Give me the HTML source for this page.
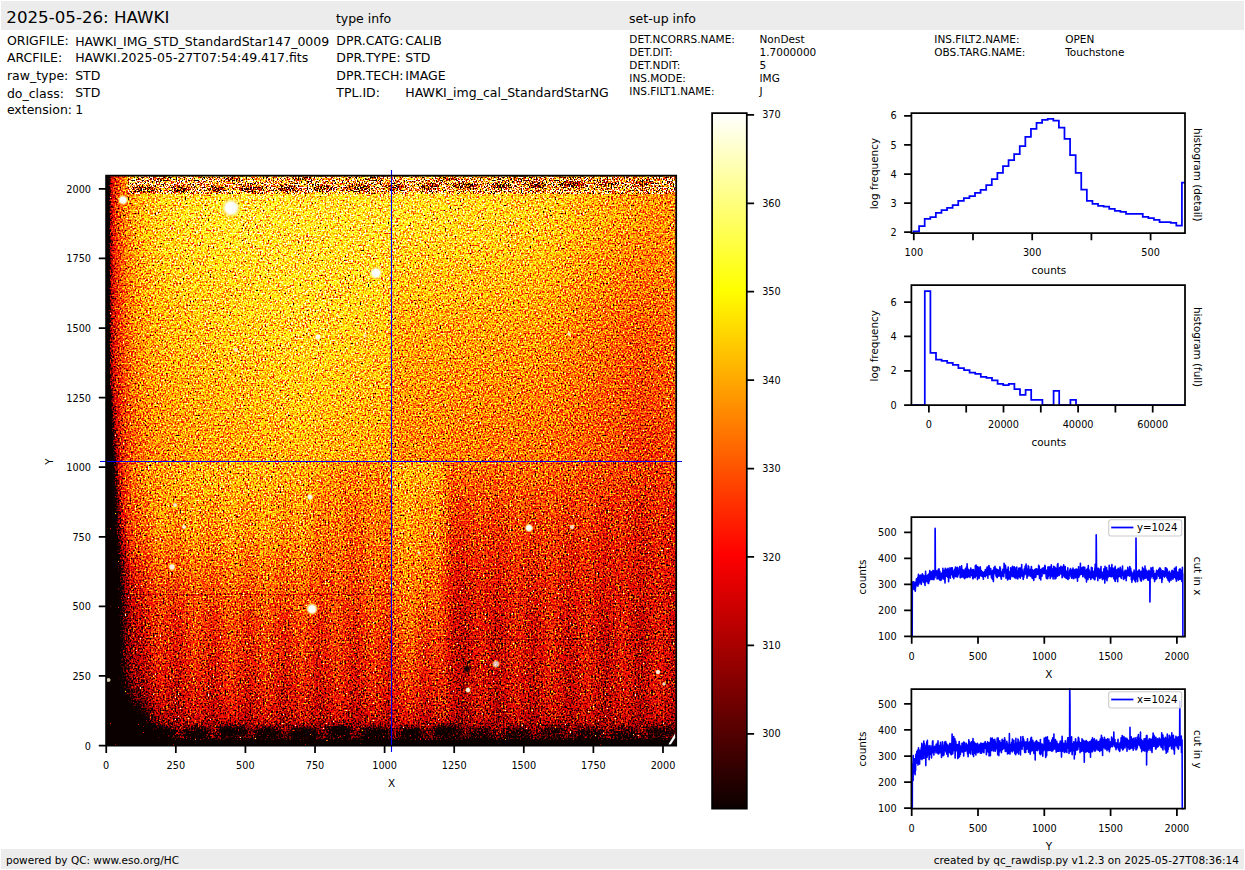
<!DOCTYPE html>
<html lang="en"><head><meta charset="utf-8"><title>2025-05-26: HAWKI</title>
<style>
html,body{margin:0;padding:0;background:#fff;overflow:hidden}
svg{display:block}
text{font-family:'DejaVu Sans','Liberation Sans',sans-serif;fill:#000}
</style></head>
<body>
<svg width="1245" height="870" viewBox="0 0 1245 870">
<defs>
<linearGradient id="hot" x1="0" y1="1" x2="0" y2="0">
<stop offset="0" stop-color="#0b0000"/><stop offset="0.365079" stop-color="#ff0000"/><stop offset="0.746032" stop-color="#ffff00"/><stop offset="1" stop-color="#ffffff"/>
</linearGradient>
<filter id="hotnoise" filterUnits="userSpaceOnUse" x="106" y="175" width="571" height="286.6" color-interpolation-filters="sRGB">
<feTurbulence type="fractalNoise" baseFrequency="0.6" numOctaves="1" seed="5" result="tn"/>
<feColorMatrix in="tn" type="matrix" values="0.4 0.4 0.4 0.4 -0.300  0 0 0 0 0  0 0 0 0 0  0 0 0 0 1" result="nz0"/>
<feComponentTransfer in="nz0" result="nz"><feFuncR type="table" tableValues="0 0 0 0 0 0 0 0 0 0 0 0 0 0 0 0 0 0 0 0 0 0 0 0.09294 0.2492 0.2649 0.2806 0.2962 0.3119 0.3276 0.3433 0.3589 0.3746 0.3903 0.406 0.4216 0.4373 0.453 0.4687 0.4843 0.5 0.5121 0.5241 0.5362 0.5482 0.5603 0.5723 0.5844 0.5965 0.6085 0.6206 0.6326 0.6447 0.6567 0.6688 0.6808 0.6929 0.705 0.717 0.7291 1 1 1 1 1 1 1 1 1 1 1 1 1 1 1 1 1 1 1 1 1"/></feComponentTransfer>
<feComposite in="SourceGraphic" in2="nz" operator="arithmetic" k1="0" k2="1.5" k3="1.560" k4="-1.280" result="val"/>
<feColorMatrix in="val" type="matrix" values="1 0 0 0 0  1 0 0 0 0  1 0 0 0 0  0 0 0 0 1" result="val3"/>
<feComponentTransfer in="val3" result="col">
<feFuncR type="table" tableValues="0.0416 0.08327 0.1249 0.1666 0.2083 0.2499 0.2916 0.3333 0.375 0.4166 0.4583 0.5 0.5416 0.5833 0.625 0.6666 0.7083 0.75 0.7917 0.8333 0.875 0.9167 0.9583 1 1 1 1 1 1 1 1 1 1 1 1 1 1 1 1 1 1 1 1 1 1 1 1 1 1 1 1 1 1 1 1 1 1 1 1 1 1 1 1 1"/>
<feFuncG type="table" tableValues="0 0 0 0 0 0 0 0 0 0 0 0 0 0 0 0 0 0 0 0 0 0 0 0 0.04167 0.08333 0.125 0.1667 0.2083 0.25 0.2917 0.3333 0.375 0.4167 0.4583 0.5 0.5417 0.5833 0.625 0.6667 0.7083 0.75 0.7917 0.8333 0.875 0.9167 0.9583 1 1 1 1 1 1 1 1 1 1 1 1 1 1 1 1 1"/>
<feFuncB type="table" tableValues="0 0 0 0 0 0 0 0 0 0 0 0 0 0 0 0 0 0 0 0 0 0 0 0 0 0 0 0 0 0 0 0 0 0 0 0 0 0 0 0 0 0 0 0 0 0 0 0 0.0625 0.125 0.1875 0.25 0.3125 0.375 0.4375 0.5 0.5625 0.625 0.6875 0.75 0.8125 0.875 0.9375 1"/>
</feComponentTransfer>
<feComposite in="col" in2="SourceGraphic" operator="in"/>
</filter>
<filter id="hotnoiseB" filterUnits="userSpaceOnUse" x="106" y="461.6" width="571" height="285" color-interpolation-filters="sRGB">
<feTurbulence type="fractalNoise" baseFrequency="0.6" numOctaves="1" seed="7" result="tn"/>
<feColorMatrix in="tn" type="matrix" values="0.4 0.4 0.4 0.4 -0.300  0 0 0 0 0  0 0 0 0 0  0 0 0 0 1" result="nz0"/>
<feComponentTransfer in="nz0" result="nz"><feFuncR type="table" tableValues="0 0 0 0 0 0 0 0 0 0 0 0 0 0 0 0 0 0 0 0 0 0 0 0.09294 0.2492 0.2649 0.2806 0.2962 0.3119 0.3276 0.3433 0.3589 0.3746 0.3903 0.406 0.4216 0.4373 0.453 0.4687 0.4843 0.5 0.5121 0.5241 0.5362 0.5482 0.5603 0.5723 0.5844 0.5965 0.6085 0.6206 0.6326 0.6447 0.6567 0.6688 0.6808 0.6929 0.705 0.717 0.7291 1 1 1 1 1 1 1 1 1 1 1 1 1 1 1 1 1 1 1 1 1"/></feComponentTransfer>
<feComposite in="SourceGraphic" in2="nz" operator="arithmetic" k1="0" k2="1.5" k3="1.704" k4="-1.352" result="val"/>
<feColorMatrix in="val" type="matrix" values="1 0 0 0 0  1 0 0 0 0  1 0 0 0 0  0 0 0 0 1" result="val3"/>
<feComponentTransfer in="val3" result="col">
<feFuncR type="table" tableValues="0.0416 0.08327 0.1249 0.1666 0.2083 0.2499 0.2916 0.3333 0.375 0.4166 0.4583 0.5 0.5416 0.5833 0.625 0.6666 0.7083 0.75 0.7917 0.8333 0.875 0.9167 0.9583 1 1 1 1 1 1 1 1 1 1 1 1 1 1 1 1 1 1 1 1 1 1 1 1 1 1 1 1 1 1 1 1 1 1 1 1 1 1 1 1 1"/>
<feFuncG type="table" tableValues="0 0 0 0 0 0 0 0 0 0 0 0 0 0 0 0 0 0 0 0 0 0 0 0 0.04167 0.08333 0.125 0.1667 0.2083 0.25 0.2917 0.3333 0.375 0.4167 0.4583 0.5 0.5417 0.5833 0.625 0.6667 0.7083 0.75 0.7917 0.8333 0.875 0.9167 0.9583 1 1 1 1 1 1 1 1 1 1 1 1 1 1 1 1 1"/>
<feFuncB type="table" tableValues="0 0 0 0 0 0 0 0 0 0 0 0 0 0 0 0 0 0 0 0 0 0 0 0 0 0 0 0 0 0 0 0 0 0 0 0 0 0 0 0 0 0 0 0 0 0 0 0 0.0625 0.125 0.1875 0.25 0.3125 0.375 0.4375 0.5 0.5625 0.625 0.6875 0.75 0.8125 0.875 0.9375 1"/>
</feComponentTransfer>
<feComposite in="col" in2="SourceGraphic" operator="in"/>
</filter>
<filter id="hotnoise2" filterUnits="userSpaceOnUse" x="106" y="175" width="571" height="24" color-interpolation-filters="sRGB">
<feTurbulence type="fractalNoise" baseFrequency="0.71" numOctaves="1" seed="9" result="tn"/>
<feColorMatrix in="tn" type="matrix" values="0.4 0.4 0.4 0.4 -0.300  0 0 0 0 0  0 0 0 0 0  0 0 0 0 1" result="nz0"/>
<feOffset in="nz0" result="nz"/>
<feComposite in="SourceGraphic" in2="nz" operator="arithmetic" k1="0" k2="1.0" k3="5.200" k4="-2.600" result="val"/>
<feColorMatrix in="val" type="matrix" values="1 0 0 0 0  1 0 0 0 0  1 0 0 0 0  0 0 0 0 1" result="val3"/>
<feComponentTransfer in="val3" result="col">
<feFuncR type="table" tableValues="0.0416 0.08327 0.1249 0.1666 0.2083 0.2499 0.2916 0.3333 0.375 0.4166 0.4583 0.5 0.5416 0.5833 0.625 0.6666 0.7083 0.75 0.7917 0.8333 0.875 0.9167 0.9583 1 1 1 1 1 1 1 1 1 1 1 1 1 1 1 1 1 1 1 1 1 1 1 1 1 1 1 1 1 1 1 1 1 1 1 1 1 1 1 1 1"/>
<feFuncG type="table" tableValues="0 0 0 0 0 0 0 0 0 0 0 0 0 0 0 0 0 0 0 0 0 0 0 0 0.04167 0.08333 0.125 0.1667 0.2083 0.25 0.2917 0.3333 0.375 0.4167 0.4583 0.5 0.5417 0.5833 0.625 0.6667 0.7083 0.75 0.7917 0.8333 0.875 0.9167 0.9583 1 1 1 1 1 1 1 1 1 1 1 1 1 1 1 1 1"/>
<feFuncB type="table" tableValues="0 0 0 0 0 0 0 0 0 0 0 0 0 0 0 0 0 0 0 0 0 0 0 0 0 0 0 0 0 0 0 0 0 0 0 0 0 0 0 0 0 0 0 0 0 0 0 0 0.0625 0.125 0.1875 0.25 0.3125 0.375 0.4375 0.5 0.5625 0.625 0.6875 0.75 0.8125 0.875 0.9375 1"/>
</feComponentTransfer>
<feComposite in="col" in2="SourceGraphic" operator="in"/>
</filter>
</defs>

<rect x="1" y="1" width="1243" height="29" fill="#ececec"/>
<rect x="1" y="849" width="1243" height="20" fill="#ececec"/>
<text x="6.3" y="22.8" font-size="16.67" text-anchor="start">2025-05-26: HAWKI</text>
<text x="335.9" y="22.5" font-size="12.5" text-anchor="start">type info</text>
<text x="629.1" y="22.5" font-size="12.5" text-anchor="start">set-up info</text>
<text x="6.9" y="44.9" font-size="12.5" text-anchor="start">ORIGFILE:</text>
<text x="75.2" y="45.5" font-size="12.5" text-anchor="start">HAWKI_IMG_STD_StandardStar147_0009</text>
<text x="6.9" y="61.8" font-size="12.5" text-anchor="start">ARCFILE:</text>
<text x="75.2" y="61.8" font-size="12.5" text-anchor="start">HAWKI.2025-05-27T07:54:49.417.fits</text>
<text x="6.9" y="79.9" font-size="12.5" text-anchor="start">raw_type:</text>
<text x="75.2" y="79.9" font-size="12.5" text-anchor="start">STD</text>
<text x="6.9" y="97.6" font-size="12.5" text-anchor="start">do_class:</text>
<text x="75.2" y="96.6" font-size="12.5" text-anchor="start">STD</text>
<text x="6.9" y="113.6" font-size="12.5" text-anchor="start">extension:</text>
<text x="75.2" y="113.6" font-size="12.5" text-anchor="start">1</text>
<text x="336.3" y="44.9" font-size="12.5" text-anchor="start">DPR.CATG:</text>
<text x="405.3" y="44.9" font-size="12.5" text-anchor="start">CALIB</text>
<text x="336.3" y="61.8" font-size="12.5" text-anchor="start">DPR.TYPE:</text>
<text x="405.3" y="61.8" font-size="12.5" text-anchor="start">STD</text>
<text x="336.3" y="79.8" font-size="12.5" text-anchor="start">DPR.TECH:</text>
<text x="405.3" y="79.8" font-size="12.5" text-anchor="start">IMAGE</text>
<text x="336.3" y="96.7" font-size="12.5" text-anchor="start">TPL.ID:</text>
<text x="405.3" y="96.7" font-size="12.5" text-anchor="start">HAWKI_img_cal_StandardStarNG</text>
<text x="629.3" y="42.7" font-size="10.5" text-anchor="start">DET.NCORRS.NAME:</text>
<text x="759.5" y="42.7" font-size="10.5" text-anchor="start">NonDest</text>
<text x="629.3" y="55.7" font-size="10.5" text-anchor="start">DET.DIT:</text>
<text x="759.5" y="55.7" font-size="10.5" text-anchor="start">1.7000000</text>
<text x="629.3" y="68.8" font-size="10.5" text-anchor="start">DET.NDIT:</text>
<text x="759.5" y="68.8" font-size="10.5" text-anchor="start">5</text>
<text x="629.3" y="81.8" font-size="10.5" text-anchor="start">INS.MODE:</text>
<text x="759.5" y="81.8" font-size="10.5" text-anchor="start">IMG</text>
<text x="629.3" y="94.8" font-size="10.5" text-anchor="start">INS.FILT1.NAME:</text>
<text x="759.5" y="94.8" font-size="10.5" text-anchor="start">J</text>
<text x="934.3" y="42.7" font-size="10.5" text-anchor="start">INS.FILT2.NAME:</text>
<text x="1065.2" y="42.7" font-size="10.5" text-anchor="start">OPEN</text>
<text x="934.3" y="55.7" font-size="10.5" text-anchor="start">OBS.TARG.NAME:</text>
<text x="1065.2" y="55.7" font-size="10.5" text-anchor="start">Touchstone</text>
<text x="6.0" y="863.7" font-size="10.5" text-anchor="start">powered by QC: www.eso.org/HC</text>
<text x="1238.9" y="863.7" font-size="10.5" text-anchor="end">created by qc_rawdisp.py v1.2.3 on 2025-05-27T08:36:14</text>
<defs><linearGradient id="s0"><stop offset="0" stop-color="#000000"/><stop offset="0.004" stop-color="#2a2a2a"/><stop offset="0.008" stop-color="#7c7c7c"/><stop offset="0.012" stop-color="#929292"/><stop offset="0.02" stop-color="#a4a4a4"/><stop offset="0.036" stop-color="#b8b8b8"/><stop offset="0.056" stop-color="#c4c4c4"/><stop offset="0.08" stop-color="#cccccc"/><stop offset="0.13" stop-color="#d3d3d3"/><stop offset="0.24" stop-color="#d8d8d8"/><stop offset="0.502" stop-color="#d5d5d5"/><stop offset="0.76" stop-color="#cdcdcd"/><stop offset="0.96" stop-color="#bababa"/><stop offset="1" stop-color="#b9b9b9"/></linearGradient><linearGradient id="s1"><stop offset="0" stop-color="#000000"/><stop offset="0.004" stop-color="#2a2a2a"/><stop offset="0.008" stop-color="#7c7c7c"/><stop offset="0.012" stop-color="#929292"/><stop offset="0.02" stop-color="#a4a4a4"/><stop offset="0.036" stop-color="#b8b8b8"/><stop offset="0.06" stop-color="#c6c6c6"/><stop offset="0.1" stop-color="#d0d0d0"/><stop offset="0.24" stop-color="#d8d8d8"/><stop offset="0.502" stop-color="#d5d5d5"/><stop offset="0.76" stop-color="#cdcdcd"/><stop offset="0.96" stop-color="#bababa"/><stop offset="1" stop-color="#b9b9b9"/></linearGradient><linearGradient id="s2"><stop offset="0" stop-color="#000000"/><stop offset="0.004" stop-color="#2a2a2a"/><stop offset="0.008" stop-color="#7c7c7c"/><stop offset="0.012" stop-color="#919191"/><stop offset="0.02" stop-color="#a4a4a4"/><stop offset="0.036" stop-color="#b8b8b8"/><stop offset="0.06" stop-color="#c6c6c6"/><stop offset="0.1" stop-color="#d0d0d0"/><stop offset="0.24" stop-color="#d8d8d8"/><stop offset="0.502" stop-color="#d5d5d5"/><stop offset="0.76" stop-color="#cdcdcd"/><stop offset="0.96" stop-color="#bababa"/><stop offset="1" stop-color="#b9b9b9"/></linearGradient><linearGradient id="s3"><stop offset="0" stop-color="#000000"/><stop offset="0.004" stop-color="#2a2a2a"/><stop offset="0.008" stop-color="#7c7c7c"/><stop offset="0.012" stop-color="#919191"/><stop offset="0.016" stop-color="#9c9c9c"/><stop offset="0.028" stop-color="#afafaf"/><stop offset="0.044" stop-color="#bebebe"/><stop offset="0.076" stop-color="#cbcbcb"/><stop offset="0.13" stop-color="#d3d3d3"/><stop offset="0.24" stop-color="#d8d8d8"/><stop offset="0.502" stop-color="#d5d5d5"/><stop offset="0.76" stop-color="#cdcdcd"/><stop offset="0.96" stop-color="#bababa"/><stop offset="1" stop-color="#b9b9b9"/></linearGradient><linearGradient id="s4"><stop offset="0" stop-color="#000000"/><stop offset="0.004" stop-color="#2a2a2a"/><stop offset="0.008" stop-color="#7c7c7c"/><stop offset="0.012" stop-color="#919191"/><stop offset="0.016" stop-color="#9c9c9c"/><stop offset="0.028" stop-color="#afafaf"/><stop offset="0.044" stop-color="#bebebe"/><stop offset="0.076" stop-color="#cbcbcb"/><stop offset="0.13" stop-color="#d3d3d3"/><stop offset="0.24" stop-color="#d8d8d8"/><stop offset="0.502" stop-color="#d5d5d5"/><stop offset="0.76" stop-color="#cdcdcd"/><stop offset="0.96" stop-color="#bababa"/><stop offset="1" stop-color="#b9b9b9"/></linearGradient><linearGradient id="s5"><stop offset="0" stop-color="#000000"/><stop offset="0.004" stop-color="#2a2a2a"/><stop offset="0.008" stop-color="#7b7b7b"/><stop offset="0.012" stop-color="#919191"/><stop offset="0.02" stop-color="#a3a3a3"/><stop offset="0.036" stop-color="#b7b7b7"/><stop offset="0.056" stop-color="#c4c4c4"/><stop offset="0.1" stop-color="#cfcfcf"/><stop offset="0.22" stop-color="#d7d7d7"/><stop offset="0.498" stop-color="#d5d5d5"/><stop offset="0.52" stop-color="#d3d3d3"/><stop offset="0.76" stop-color="#cccccc"/><stop offset="0.94" stop-color="#bababa"/><stop offset="1" stop-color="#b9b9b9"/></linearGradient><linearGradient id="s6"><stop offset="0" stop-color="#000000"/><stop offset="0.004" stop-color="#292929"/><stop offset="0.008" stop-color="#7b7b7b"/><stop offset="0.012" stop-color="#909090"/><stop offset="0.016" stop-color="#9b9b9b"/><stop offset="0.028" stop-color="#aeaeae"/><stop offset="0.048" stop-color="#bfbfbf"/><stop offset="0.08" stop-color="#cbcbcb"/><stop offset="0.12" stop-color="#d0d0d0"/><stop offset="0.24" stop-color="#d6d6d6"/><stop offset="0.4" stop-color="#d6d6d6"/><stop offset="0.502" stop-color="#d3d3d3"/><stop offset="0.61" stop-color="#d0d0d0"/><stop offset="0.78" stop-color="#c9c9c9"/><stop offset="0.94" stop-color="#b8b8b8"/><stop offset="1" stop-color="#b8b8b8"/></linearGradient><linearGradient id="s7"><stop offset="0" stop-color="#000000"/><stop offset="0.004" stop-color="#292929"/><stop offset="0.008" stop-color="#7a7a7a"/><stop offset="0.012" stop-color="#8f8f8f"/><stop offset="0.016" stop-color="#9a9a9a"/><stop offset="0.028" stop-color="#adadad"/><stop offset="0.044" stop-color="#bbbbbb"/><stop offset="0.064" stop-color="#c5c5c5"/><stop offset="0.1" stop-color="#cecece"/><stop offset="0.26" stop-color="#d6d6d6"/><stop offset="0.495" stop-color="#d3d3d3"/><stop offset="0.505" stop-color="#d0d0d0"/><stop offset="0.76" stop-color="#c9c9c9"/><stop offset="0.94" stop-color="#b7b7b7"/><stop offset="1" stop-color="#b7b7b7"/></linearGradient><linearGradient id="s8"><stop offset="0" stop-color="#000000"/><stop offset="0.004" stop-color="#282828"/><stop offset="0.008" stop-color="#797979"/><stop offset="0.012" stop-color="#8f8f8f"/><stop offset="0.02" stop-color="#a1a1a1"/><stop offset="0.036" stop-color="#b5b5b5"/><stop offset="0.06" stop-color="#c3c3c3"/><stop offset="0.1" stop-color="#cdcdcd"/><stop offset="0.26" stop-color="#d5d5d5"/><stop offset="0.38" stop-color="#d5d5d5"/><stop offset="0.498" stop-color="#d1d1d1"/><stop offset="0.505" stop-color="#cecece"/><stop offset="0.76" stop-color="#c8c8c8"/><stop offset="0.94" stop-color="#b5b5b5"/><stop offset="1" stop-color="#b6b6b6"/></linearGradient><linearGradient id="s9"><stop offset="0" stop-color="#000000"/><stop offset="0.004" stop-color="#282828"/><stop offset="0.008" stop-color="#797979"/><stop offset="0.012" stop-color="#8e8e8e"/><stop offset="0.016" stop-color="#999999"/><stop offset="0.028" stop-color="#acacac"/><stop offset="0.044" stop-color="#bababa"/><stop offset="0.068" stop-color="#c5c5c5"/><stop offset="0.11" stop-color="#cdcdcd"/><stop offset="0.3" stop-color="#d5d5d5"/><stop offset="0.495" stop-color="#d1d1d1"/><stop offset="0.505" stop-color="#cdcdcd"/><stop offset="0.76" stop-color="#c6c6c6"/><stop offset="0.94" stop-color="#b4b4b4"/><stop offset="1" stop-color="#b5b5b5"/></linearGradient><linearGradient id="s10"><stop offset="0" stop-color="#000000"/><stop offset="0.004" stop-color="#272727"/><stop offset="0.008" stop-color="#787878"/><stop offset="0.012" stop-color="#8e8e8e"/><stop offset="0.02" stop-color="#9f9f9f"/><stop offset="0.028" stop-color="#ababab"/><stop offset="0.048" stop-color="#bcbcbc"/><stop offset="0.08" stop-color="#c7c7c7"/><stop offset="0.12" stop-color="#cdcdcd"/><stop offset="0.32" stop-color="#d4d4d4"/><stop offset="0.495" stop-color="#d0d0d0"/><stop offset="0.505" stop-color="#cbcbcb"/><stop offset="0.76" stop-color="#c5c5c5"/><stop offset="0.94" stop-color="#b3b3b3"/><stop offset="1" stop-color="#b4b4b4"/></linearGradient><linearGradient id="s11"><stop offset="0" stop-color="#000000"/><stop offset="0.004" stop-color="#272727"/><stop offset="0.008" stop-color="#787878"/><stop offset="0.012" stop-color="#8d8d8d"/><stop offset="0.02" stop-color="#9f9f9f"/><stop offset="0.032" stop-color="#afafaf"/><stop offset="0.052" stop-color="#bdbdbd"/><stop offset="0.08" stop-color="#c6c6c6"/><stop offset="0.12" stop-color="#cccccc"/><stop offset="0.34" stop-color="#d4d4d4"/><stop offset="0.495" stop-color="#cfcfcf"/><stop offset="0.505" stop-color="#cacaca"/><stop offset="0.76" stop-color="#c4c4c4"/><stop offset="0.94" stop-color="#b1b1b1"/><stop offset="1" stop-color="#b3b3b3"/></linearGradient><linearGradient id="s12"><stop offset="0" stop-color="#000000"/><stop offset="0.004" stop-color="#262626"/><stop offset="0.008" stop-color="#777777"/><stop offset="0.012" stop-color="#8c8c8c"/><stop offset="0.016" stop-color="#979797"/><stop offset="0.032" stop-color="#aeaeae"/><stop offset="0.048" stop-color="#bababa"/><stop offset="0.076" stop-color="#c5c5c5"/><stop offset="0.14" stop-color="#cccccc"/><stop offset="0.34" stop-color="#d3d3d3"/><stop offset="0.48" stop-color="#cfcfcf"/><stop offset="0.498" stop-color="#cccccc"/><stop offset="0.505" stop-color="#c8c8c8"/><stop offset="0.74" stop-color="#c4c4c4"/><stop offset="0.94" stop-color="#b0b0b0"/><stop offset="1" stop-color="#b2b2b2"/></linearGradient><linearGradient id="s13"><stop offset="0" stop-color="#000000"/><stop offset="0.004" stop-color="#262626"/><stop offset="0.008" stop-color="#777777"/><stop offset="0.012" stop-color="#8c8c8c"/><stop offset="0.02" stop-color="#9d9d9d"/><stop offset="0.028" stop-color="#a9a9a9"/><stop offset="0.044" stop-color="#b7b7b7"/><stop offset="0.076" stop-color="#c4c4c4"/><stop offset="0.14" stop-color="#cbcbcb"/><stop offset="0.34" stop-color="#d3d3d3"/><stop offset="0.495" stop-color="#cdcdcd"/><stop offset="0.505" stop-color="#c6c6c6"/><stop offset="0.76" stop-color="#c1c1c1"/><stop offset="0.94" stop-color="#aeaeae"/><stop offset="1" stop-color="#b2b2b2"/></linearGradient><linearGradient id="s14"><stop offset="0" stop-color="#000000"/><stop offset="0.004" stop-color="#252525"/><stop offset="0.008" stop-color="#767676"/><stop offset="0.012" stop-color="#8b8b8b"/><stop offset="0.02" stop-color="#9d9d9d"/><stop offset="0.036" stop-color="#b0b0b0"/><stop offset="0.056" stop-color="#bdbdbd"/><stop offset="0.09" stop-color="#c6c6c6"/><stop offset="0.24" stop-color="#cfcfcf"/><stop offset="0.36" stop-color="#d2d2d2"/><stop offset="0.495" stop-color="#cccccc"/><stop offset="0.505" stop-color="#c5c5c5"/><stop offset="0.76" stop-color="#c0c0c0"/><stop offset="0.94" stop-color="#adadad"/><stop offset="1" stop-color="#b1b1b1"/></linearGradient><linearGradient id="s15"><stop offset="0" stop-color="#000000"/><stop offset="0.004" stop-color="#252525"/><stop offset="0.008" stop-color="#757575"/><stop offset="0.012" stop-color="#8b8b8b"/><stop offset="0.02" stop-color="#9c9c9c"/><stop offset="0.032" stop-color="#acacac"/><stop offset="0.052" stop-color="#bababa"/><stop offset="0.08" stop-color="#c3c3c3"/><stop offset="0.17" stop-color="#cbcbcb"/><stop offset="0.36" stop-color="#d1d1d1"/><stop offset="0.48" stop-color="#cccccc"/><stop offset="0.498" stop-color="#c9c9c9"/><stop offset="0.505" stop-color="#c3c3c3"/><stop offset="0.76" stop-color="#bebebe"/><stop offset="0.94" stop-color="#ababab"/><stop offset="1" stop-color="#b0b0b0"/></linearGradient><linearGradient id="s16"><stop offset="0" stop-color="#000000"/><stop offset="0.004" stop-color="#242424"/><stop offset="0.008" stop-color="#757575"/><stop offset="0.012" stop-color="#8a8a8a"/><stop offset="0.02" stop-color="#9b9b9b"/><stop offset="0.032" stop-color="#ababab"/><stop offset="0.048" stop-color="#b7b7b7"/><stop offset="0.072" stop-color="#c0c0c0"/><stop offset="0.12" stop-color="#c7c7c7"/><stop offset="0.34" stop-color="#d1d1d1"/><stop offset="0.48" stop-color="#cbcbcb"/><stop offset="0.498" stop-color="#c8c8c8"/><stop offset="0.505" stop-color="#c2c2c2"/><stop offset="0.76" stop-color="#bdbdbd"/><stop offset="0.94" stop-color="#aaaaaa"/><stop offset="1" stop-color="#afafaf"/></linearGradient><linearGradient id="s17"><stop offset="0" stop-color="#000000"/><stop offset="0.004" stop-color="#232323"/><stop offset="0.008" stop-color="#747474"/><stop offset="0.012" stop-color="#898989"/><stop offset="0.02" stop-color="#9a9a9a"/><stop offset="0.032" stop-color="#aaaaaa"/><stop offset="0.048" stop-color="#b6b6b6"/><stop offset="0.072" stop-color="#bfbfbf"/><stop offset="0.1" stop-color="#c5c5c5"/><stop offset="0.34" stop-color="#d0d0d0"/><stop offset="0.46" stop-color="#cbcbcb"/><stop offset="0.495" stop-color="#c9c9c9"/><stop offset="0.505" stop-color="#c1c1c1"/><stop offset="0.76" stop-color="#bcbcbc"/><stop offset="0.94" stop-color="#a9a9a9"/><stop offset="1" stop-color="#aeaeae"/></linearGradient><linearGradient id="s18"><stop offset="0" stop-color="#000000"/><stop offset="0.004" stop-color="#222222"/><stop offset="0.008" stop-color="#737373"/><stop offset="0.012" stop-color="#888888"/><stop offset="0.02" stop-color="#9a9a9a"/><stop offset="0.036" stop-color="#adadad"/><stop offset="0.06" stop-color="#bbbbbb"/><stop offset="0.11" stop-color="#c5c5c5"/><stop offset="0.34" stop-color="#cfcfcf"/><stop offset="0.46" stop-color="#cbcbcb"/><stop offset="0.495" stop-color="#c8c8c8"/><stop offset="0.505" stop-color="#c0c0c0"/><stop offset="0.76" stop-color="#bbbbbb"/><stop offset="0.94" stop-color="#a8a8a8"/><stop offset="1" stop-color="#adadad"/></linearGradient><linearGradient id="s19"><stop offset="0" stop-color="#000000"/><stop offset="0.004" stop-color="#222222"/><stop offset="0.008" stop-color="#727272"/><stop offset="0.012" stop-color="#878787"/><stop offset="0.02" stop-color="#999999"/><stop offset="0.036" stop-color="#acacac"/><stop offset="0.06" stop-color="#bababa"/><stop offset="0.1" stop-color="#c3c3c3"/><stop offset="0.34" stop-color="#cecece"/><stop offset="0.46" stop-color="#cacaca"/><stop offset="0.495" stop-color="#c7c7c7"/><stop offset="0.505" stop-color="#bfbfbf"/><stop offset="0.76" stop-color="#bababa"/><stop offset="0.92" stop-color="#aaaaaa"/><stop offset="0.94" stop-color="#a7a7a7"/><stop offset="1" stop-color="#acacac"/></linearGradient><linearGradient id="s20"><stop offset="0" stop-color="#000000"/><stop offset="0.004" stop-color="#212121"/><stop offset="0.008" stop-color="#717171"/><stop offset="0.012" stop-color="#868686"/><stop offset="0.02" stop-color="#989898"/><stop offset="0.036" stop-color="#ababab"/><stop offset="0.056" stop-color="#b7b7b7"/><stop offset="0.08" stop-color="#bfbfbf"/><stop offset="0.16" stop-color="#c6c6c6"/><stop offset="0.36" stop-color="#cdcdcd"/><stop offset="0.495" stop-color="#c7c7c7"/><stop offset="0.505" stop-color="#bfbfbf"/><stop offset="0.76" stop-color="#b9b9b9"/><stop offset="0.92" stop-color="#a9a9a9"/><stop offset="0.94" stop-color="#a6a6a6"/><stop offset="1" stop-color="#ababab"/></linearGradient><linearGradient id="s21"><stop offset="0" stop-color="#000000"/><stop offset="0.004" stop-color="#121212"/><stop offset="0.008" stop-color="#6c6c6c"/><stop offset="0.012" stop-color="#848484"/><stop offset="0.02" stop-color="#979797"/><stop offset="0.036" stop-color="#aaaaaa"/><stop offset="0.056" stop-color="#b7b7b7"/><stop offset="0.09" stop-color="#c0c0c0"/><stop offset="0.32" stop-color="#cccccc"/><stop offset="0.48" stop-color="#c7c7c7"/><stop offset="0.495" stop-color="#c6c6c6"/><stop offset="0.505" stop-color="#bebebe"/><stop offset="0.76" stop-color="#b8b8b8"/><stop offset="0.9" stop-color="#ababab"/><stop offset="0.94" stop-color="#a5a5a5"/><stop offset="1" stop-color="#ababab"/></linearGradient><linearGradient id="s22"><stop offset="0" stop-color="#000000"/><stop offset="0.004" stop-color="#000000"/><stop offset="0.008" stop-color="#5f5f5f"/><stop offset="0.012" stop-color="#7f7f7f"/><stop offset="0.016" stop-color="#8d8d8d"/><stop offset="0.024" stop-color="#9c9c9c"/><stop offset="0.04" stop-color="#adadad"/><stop offset="0.064" stop-color="#b9b9b9"/><stop offset="0.11" stop-color="#c1c1c1"/><stop offset="0.34" stop-color="#cbcbcb"/><stop offset="0.495" stop-color="#c5c5c5"/><stop offset="0.505" stop-color="#bdbdbd"/><stop offset="0.78" stop-color="#b6b6b6"/><stop offset="0.9" stop-color="#aaaaaa"/><stop offset="0.94" stop-color="#a5a5a5"/><stop offset="1" stop-color="#aaaaaa"/></linearGradient><linearGradient id="s23"><stop offset="0" stop-color="#000000"/><stop offset="0.004" stop-color="#000000"/><stop offset="0.008" stop-color="#505050"/><stop offset="0.012" stop-color="#797979"/><stop offset="0.016" stop-color="#8a8a8a"/><stop offset="0.024" stop-color="#9b9b9b"/><stop offset="0.04" stop-color="#acacac"/><stop offset="0.064" stop-color="#b8b8b8"/><stop offset="0.11" stop-color="#c0c0c0"/><stop offset="0.34" stop-color="#cbcbcb"/><stop offset="0.495" stop-color="#c4c4c4"/><stop offset="0.505" stop-color="#bcbcbc"/><stop offset="0.78" stop-color="#b5b5b5"/><stop offset="0.92" stop-color="#a7a7a7"/><stop offset="0.94" stop-color="#a4a4a4"/><stop offset="1" stop-color="#a9a9a9"/></linearGradient><linearGradient id="s24"><stop offset="0" stop-color="#000000"/><stop offset="0.004" stop-color="#000000"/><stop offset="0.008" stop-color="#414141"/><stop offset="0.012" stop-color="#717171"/><stop offset="0.016" stop-color="#878787"/><stop offset="0.02" stop-color="#929292"/><stop offset="0.032" stop-color="#a4a4a4"/><stop offset="0.052" stop-color="#b2b2b2"/><stop offset="0.08" stop-color="#bbbbbb"/><stop offset="0.15" stop-color="#c2c2c2"/><stop offset="0.34" stop-color="#cacaca"/><stop offset="0.495" stop-color="#c3c3c3"/><stop offset="0.505" stop-color="#bcbcbc"/><stop offset="0.78" stop-color="#b4b4b4"/><stop offset="0.9" stop-color="#a9a9a9"/><stop offset="0.94" stop-color="#a3a3a3"/><stop offset="1" stop-color="#a8a8a8"/></linearGradient><linearGradient id="s25"><stop offset="0" stop-color="#000000"/><stop offset="0.004" stop-color="#000000"/><stop offset="0.008" stop-color="#313131"/><stop offset="0.012" stop-color="#686868"/><stop offset="0.016" stop-color="#828282"/><stop offset="0.02" stop-color="#8f8f8f"/><stop offset="0.028" stop-color="#9e9e9e"/><stop offset="0.044" stop-color="#adadad"/><stop offset="0.068" stop-color="#b7b7b7"/><stop offset="0.11" stop-color="#bebebe"/><stop offset="0.34" stop-color="#c9c9c9"/><stop offset="0.495" stop-color="#c2c2c2"/><stop offset="0.505" stop-color="#bbbbbb"/><stop offset="0.78" stop-color="#b3b3b3"/><stop offset="0.9" stop-color="#a8a8a8"/><stop offset="0.94" stop-color="#a2a2a2"/><stop offset="1" stop-color="#a7a7a7"/></linearGradient><linearGradient id="s26"><stop offset="0" stop-color="#000000"/><stop offset="0.004" stop-color="#000000"/><stop offset="0.008" stop-color="#222222"/><stop offset="0.012" stop-color="#5f5f5f"/><stop offset="0.016" stop-color="#7c7c7c"/><stop offset="0.02" stop-color="#8c8c8c"/><stop offset="0.024" stop-color="#969696"/><stop offset="0.04" stop-color="#a9a9a9"/><stop offset="0.064" stop-color="#b5b5b5"/><stop offset="0.1" stop-color="#bdbdbd"/><stop offset="0.34" stop-color="#c8c8c8"/><stop offset="0.495" stop-color="#c1c1c1"/><stop offset="0.505" stop-color="#bababa"/><stop offset="0.78" stop-color="#b2b2b2"/><stop offset="0.9" stop-color="#a7a7a7"/><stop offset="0.94" stop-color="#a1a1a1"/><stop offset="1" stop-color="#a6a6a6"/></linearGradient><linearGradient id="s27"><stop offset="0" stop-color="#000000"/><stop offset="0.004" stop-color="#000000"/><stop offset="0.008" stop-color="#131313"/><stop offset="0.012" stop-color="#555555"/><stop offset="0.016" stop-color="#767676"/><stop offset="0.02" stop-color="#888888"/><stop offset="0.028" stop-color="#9b9b9b"/><stop offset="0.044" stop-color="#ababab"/><stop offset="0.076" stop-color="#b8b8b8"/><stop offset="0.14" stop-color="#bfbfbf"/><stop offset="0.34" stop-color="#c7c7c7"/><stop offset="0.495" stop-color="#c1c1c1"/><stop offset="0.505" stop-color="#b9b9b9"/><stop offset="0.78" stop-color="#b1b1b1"/><stop offset="0.9" stop-color="#a7a7a7"/><stop offset="0.94" stop-color="#a0a0a0"/><stop offset="1" stop-color="#a5a5a5"/></linearGradient><linearGradient id="s28"><stop offset="0" stop-color="#000000"/><stop offset="0.004" stop-color="#000000"/><stop offset="0.008" stop-color="#040404"/><stop offset="0.012" stop-color="#4a4a4a"/><stop offset="0.016" stop-color="#6f6f6f"/><stop offset="0.02" stop-color="#848484"/><stop offset="0.024" stop-color="#919191"/><stop offset="0.032" stop-color="#9f9f9f"/><stop offset="0.048" stop-color="#acacac"/><stop offset="0.08" stop-color="#b8b8b8"/><stop offset="0.16" stop-color="#bfbfbf"/><stop offset="0.34" stop-color="#c6c6c6"/><stop offset="0.495" stop-color="#c0c0c0"/><stop offset="0.505" stop-color="#b9b9b9"/><stop offset="0.76" stop-color="#b2b2b2"/><stop offset="0.88" stop-color="#a9a9a9"/><stop offset="0.94" stop-color="#9f9f9f"/><stop offset="1" stop-color="#a4a4a4"/></linearGradient><linearGradient id="s29"><stop offset="0" stop-color="#000000"/><stop offset="0.008" stop-color="#000000"/><stop offset="0.012" stop-color="#3f3f3f"/><stop offset="0.016" stop-color="#686868"/><stop offset="0.02" stop-color="#7f7f7f"/><stop offset="0.024" stop-color="#8d8d8d"/><stop offset="0.028" stop-color="#979797"/><stop offset="0.04" stop-color="#a6a6a6"/><stop offset="0.068" stop-color="#b4b4b4"/><stop offset="0.12" stop-color="#bcbcbc"/><stop offset="0.36" stop-color="#c5c5c5"/><stop offset="0.495" stop-color="#bfbfbf"/><stop offset="0.505" stop-color="#b8b8b8"/><stop offset="0.76" stop-color="#b1b1b1"/><stop offset="0.88" stop-color="#a9a9a9"/><stop offset="0.94" stop-color="#9f9f9f"/><stop offset="1" stop-color="#a4a4a4"/></linearGradient><linearGradient id="s30"><stop offset="0" stop-color="#000000"/><stop offset="0.008" stop-color="#000000"/><stop offset="0.012" stop-color="#3b3b3b"/><stop offset="0.016" stop-color="#676767"/><stop offset="0.02" stop-color="#818181"/><stop offset="0.024" stop-color="#909090"/><stop offset="0.028" stop-color="#9b9b9b"/><stop offset="0.036" stop-color="#a7a7a7"/><stop offset="0.052" stop-color="#b3b3b3"/><stop offset="0.08" stop-color="#bdbdbd"/><stop offset="0.14" stop-color="#c3c3c3"/><stop offset="0.26" stop-color="#c6c6c6"/><stop offset="0.34" stop-color="#c3c3c3"/><stop offset="0.42" stop-color="#b9b9b9"/><stop offset="0.495" stop-color="#b9b9b9"/><stop offset="0.505" stop-color="#c5c5c5"/><stop offset="0.578" stop-color="#c1c1c1"/><stop offset="0.605" stop-color="#b0b0b0"/><stop offset="0.76" stop-color="#afafaf"/><stop offset="0.92" stop-color="#a1a1a1"/><stop offset="0.96" stop-color="#a0a0a0"/><stop offset="1" stop-color="#a1a1a1"/></linearGradient><linearGradient id="s31"><stop offset="0" stop-color="#000000"/><stop offset="0.008" stop-color="#000000"/><stop offset="0.016" stop-color="#5f5f5f"/><stop offset="0.02" stop-color="#7b7b7b"/><stop offset="0.024" stop-color="#8c8c8c"/><stop offset="0.028" stop-color="#989898"/><stop offset="0.036" stop-color="#a5a5a5"/><stop offset="0.048" stop-color="#b0b0b0"/><stop offset="0.08" stop-color="#bcbcbc"/><stop offset="0.14" stop-color="#c2c2c2"/><stop offset="0.26" stop-color="#c5c5c5"/><stop offset="0.34" stop-color="#c2c2c2"/><stop offset="0.42" stop-color="#b7b7b7"/><stop offset="0.495" stop-color="#b8b8b8"/><stop offset="0.505" stop-color="#c4c4c4"/><stop offset="0.578" stop-color="#c1c1c1"/><stop offset="0.605" stop-color="#adadad"/><stop offset="0.76" stop-color="#adadad"/><stop offset="0.96" stop-color="#9e9e9e"/><stop offset="1" stop-color="#9f9f9f"/></linearGradient><linearGradient id="s32"><stop offset="0" stop-color="#000000"/><stop offset="0.008" stop-color="#000000"/><stop offset="0.012" stop-color="#262626"/><stop offset="0.016" stop-color="#575757"/><stop offset="0.02" stop-color="#757575"/><stop offset="0.024" stop-color="#888888"/><stop offset="0.028" stop-color="#959595"/><stop offset="0.036" stop-color="#a4a4a4"/><stop offset="0.052" stop-color="#b1b1b1"/><stop offset="0.076" stop-color="#bababa"/><stop offset="0.15" stop-color="#c2c2c2"/><stop offset="0.24" stop-color="#c4c4c4"/><stop offset="0.34" stop-color="#c1c1c1"/><stop offset="0.42" stop-color="#b6b6b6"/><stop offset="0.495" stop-color="#b7b7b7"/><stop offset="0.505" stop-color="#c3c3c3"/><stop offset="0.578" stop-color="#c0c0c0"/><stop offset="0.605" stop-color="#ababab"/><stop offset="0.76" stop-color="#ababab"/><stop offset="0.94" stop-color="#9c9c9c"/><stop offset="1" stop-color="#9e9e9e"/></linearGradient><linearGradient id="s33"><stop offset="0" stop-color="#000000"/><stop offset="0.008" stop-color="#000000"/><stop offset="0.012" stop-color="#1b1b1b"/><stop offset="0.016" stop-color="#4e4e4e"/><stop offset="0.02" stop-color="#6e6e6e"/><stop offset="0.024" stop-color="#838383"/><stop offset="0.028" stop-color="#919191"/><stop offset="0.036" stop-color="#a2a2a2"/><stop offset="0.048" stop-color="#aeaeae"/><stop offset="0.072" stop-color="#b8b8b8"/><stop offset="0.11" stop-color="#bfbfbf"/><stop offset="0.22" stop-color="#c4c4c4"/><stop offset="0.34" stop-color="#c0c0c0"/><stop offset="0.42" stop-color="#b4b4b4"/><stop offset="0.495" stop-color="#b6b6b6"/><stop offset="0.505" stop-color="#c2c2c2"/><stop offset="0.578" stop-color="#bfbfbf"/><stop offset="0.605" stop-color="#a9a9a9"/><stop offset="0.76" stop-color="#a9a9a9"/><stop offset="0.96" stop-color="#9b9b9b"/><stop offset="1" stop-color="#9d9d9d"/></linearGradient><linearGradient id="s34"><stop offset="0" stop-color="#000000"/><stop offset="0.008" stop-color="#000000"/><stop offset="0.012" stop-color="#111111"/><stop offset="0.016" stop-color="#464646"/><stop offset="0.02" stop-color="#686868"/><stop offset="0.024" stop-color="#7e7e7e"/><stop offset="0.028" stop-color="#8d8d8d"/><stop offset="0.032" stop-color="#989898"/><stop offset="0.04" stop-color="#a5a5a5"/><stop offset="0.056" stop-color="#b1b1b1"/><stop offset="0.08" stop-color="#b9b9b9"/><stop offset="0.12" stop-color="#bfbfbf"/><stop offset="0.24" stop-color="#c2c2c2"/><stop offset="0.34" stop-color="#bfbfbf"/><stop offset="0.42" stop-color="#b3b3b3"/><stop offset="0.495" stop-color="#b5b5b5"/><stop offset="0.505" stop-color="#c1c1c1"/><stop offset="0.578" stop-color="#bfbfbf"/><stop offset="0.605" stop-color="#a6a6a6"/><stop offset="0.76" stop-color="#a8a8a8"/><stop offset="0.94" stop-color="#999999"/><stop offset="1" stop-color="#9b9b9b"/></linearGradient><linearGradient id="s35"><stop offset="0" stop-color="#000000"/><stop offset="0.008" stop-color="#000000"/><stop offset="0.012" stop-color="#070707"/><stop offset="0.016" stop-color="#3e3e3e"/><stop offset="0.02" stop-color="#616161"/><stop offset="0.024" stop-color="#797979"/><stop offset="0.028" stop-color="#898989"/><stop offset="0.032" stop-color="#959595"/><stop offset="0.04" stop-color="#a3a3a3"/><stop offset="0.056" stop-color="#b0b0b0"/><stop offset="0.08" stop-color="#b9b9b9"/><stop offset="0.14" stop-color="#bfbfbf"/><stop offset="0.24" stop-color="#c1c1c1"/><stop offset="0.34" stop-color="#bebebe"/><stop offset="0.42" stop-color="#b2b2b2"/><stop offset="0.495" stop-color="#b4b4b4"/><stop offset="0.505" stop-color="#c0c0c0"/><stop offset="0.578" stop-color="#bebebe"/><stop offset="0.605" stop-color="#a4a4a4"/><stop offset="0.76" stop-color="#a6a6a6"/><stop offset="0.94" stop-color="#989898"/><stop offset="1" stop-color="#9a9a9a"/></linearGradient><linearGradient id="s36"><stop offset="0" stop-color="#000000"/><stop offset="0.012" stop-color="#000000"/><stop offset="0.016" stop-color="#353535"/><stop offset="0.02" stop-color="#5a5a5a"/><stop offset="0.024" stop-color="#747474"/><stop offset="0.028" stop-color="#858585"/><stop offset="0.036" stop-color="#9a9a9a"/><stop offset="0.044" stop-color="#a6a6a6"/><stop offset="0.06" stop-color="#b1b1b1"/><stop offset="0.09" stop-color="#bababa"/><stop offset="0.17" stop-color="#bfbfbf"/><stop offset="0.26" stop-color="#c0c0c0"/><stop offset="0.34" stop-color="#bdbdbd"/><stop offset="0.42" stop-color="#b0b0b0"/><stop offset="0.495" stop-color="#b3b3b3"/><stop offset="0.505" stop-color="#bfbfbf"/><stop offset="0.578" stop-color="#bdbdbd"/><stop offset="0.605" stop-color="#a1a1a1"/><stop offset="0.76" stop-color="#a4a4a4"/><stop offset="0.94" stop-color="#979797"/><stop offset="1" stop-color="#989898"/></linearGradient><linearGradient id="s37"><stop offset="0" stop-color="#000000"/><stop offset="0.012" stop-color="#000000"/><stop offset="0.016" stop-color="#2c2c2c"/><stop offset="0.02" stop-color="#535353"/><stop offset="0.024" stop-color="#6d6d6d"/><stop offset="0.028" stop-color="#808080"/><stop offset="0.036" stop-color="#979797"/><stop offset="0.044" stop-color="#a3a3a3"/><stop offset="0.06" stop-color="#afafaf"/><stop offset="0.08" stop-color="#b6b6b6"/><stop offset="0.12" stop-color="#bbbbbb"/><stop offset="0.24" stop-color="#bfbfbf"/><stop offset="0.34" stop-color="#bcbcbc"/><stop offset="0.42" stop-color="#afafaf"/><stop offset="0.495" stop-color="#b2b2b2"/><stop offset="0.505" stop-color="#bebebe"/><stop offset="0.578" stop-color="#bcbcbc"/><stop offset="0.605" stop-color="#9f9f9f"/><stop offset="0.76" stop-color="#a2a2a2"/><stop offset="0.94" stop-color="#959595"/><stop offset="1" stop-color="#979797"/></linearGradient><linearGradient id="s38"><stop offset="0" stop-color="#000000"/><stop offset="0.012" stop-color="#000000"/><stop offset="0.016" stop-color="#222222"/><stop offset="0.02" stop-color="#4a4a4a"/><stop offset="0.024" stop-color="#656565"/><stop offset="0.028" stop-color="#797979"/><stop offset="0.032" stop-color="#878787"/><stop offset="0.04" stop-color="#999999"/><stop offset="0.048" stop-color="#a3a3a3"/><stop offset="0.068" stop-color="#afafaf"/><stop offset="0.1" stop-color="#b6b6b6"/><stop offset="0.22" stop-color="#bcbcbc"/><stop offset="0.34" stop-color="#b9b9b9"/><stop offset="0.42" stop-color="#adadad"/><stop offset="0.495" stop-color="#b1b1b1"/><stop offset="0.505" stop-color="#bcbcbc"/><stop offset="0.578" stop-color="#bababa"/><stop offset="0.605" stop-color="#9d9d9d"/><stop offset="0.76" stop-color="#a0a0a0"/><stop offset="0.94" stop-color="#949494"/><stop offset="1" stop-color="#969696"/></linearGradient><linearGradient id="s39"><stop offset="0" stop-color="#000000"/><stop offset="0.012" stop-color="#000000"/><stop offset="0.016" stop-color="#171717"/><stop offset="0.02" stop-color="#404040"/><stop offset="0.024" stop-color="#5d5d5d"/><stop offset="0.028" stop-color="#727272"/><stop offset="0.032" stop-color="#818181"/><stop offset="0.04" stop-color="#949494"/><stop offset="0.048" stop-color="#9f9f9f"/><stop offset="0.064" stop-color="#aaaaaa"/><stop offset="0.1" stop-color="#b3b3b3"/><stop offset="0.22" stop-color="#b9b9b9"/><stop offset="0.34" stop-color="#b6b6b6"/><stop offset="0.42" stop-color="#ababab"/><stop offset="0.495" stop-color="#afafaf"/><stop offset="0.505" stop-color="#bbbbbb"/><stop offset="0.578" stop-color="#b9b9b9"/><stop offset="0.605" stop-color="#9b9b9b"/><stop offset="0.76" stop-color="#9f9f9f"/><stop offset="0.94" stop-color="#939393"/><stop offset="1" stop-color="#959595"/></linearGradient><linearGradient id="s40"><stop offset="0" stop-color="#000000"/><stop offset="0.012" stop-color="#000000"/><stop offset="0.016" stop-color="#0d0d0d"/><stop offset="0.02" stop-color="#373737"/><stop offset="0.024" stop-color="#555555"/><stop offset="0.028" stop-color="#6b6b6b"/><stop offset="0.036" stop-color="#868686"/><stop offset="0.044" stop-color="#959595"/><stop offset="0.06" stop-color="#a4a4a4"/><stop offset="0.09" stop-color="#aeaeae"/><stop offset="0.2" stop-color="#b5b5b5"/><stop offset="0.34" stop-color="#b4b4b4"/><stop offset="0.42" stop-color="#a9a9a9"/><stop offset="0.495" stop-color="#aeaeae"/><stop offset="0.505" stop-color="#b9b9b9"/><stop offset="0.578" stop-color="#b7b7b7"/><stop offset="0.605" stop-color="#999999"/><stop offset="0.76" stop-color="#9d9d9d"/><stop offset="0.94" stop-color="#929292"/><stop offset="1" stop-color="#949494"/></linearGradient><linearGradient id="s41"><stop offset="0" stop-color="#000000"/><stop offset="0.016" stop-color="#020202"/><stop offset="0.02" stop-color="#2e2e2e"/><stop offset="0.024" stop-color="#4d4d4d"/><stop offset="0.028" stop-color="#636363"/><stop offset="0.032" stop-color="#747474"/><stop offset="0.036" stop-color="#808080"/><stop offset="0.044" stop-color="#909090"/><stop offset="0.052" stop-color="#9a9a9a"/><stop offset="0.068" stop-color="#a4a4a4"/><stop offset="0.11" stop-color="#adadad"/><stop offset="0.24" stop-color="#b3b3b3"/><stop offset="0.34" stop-color="#b1b1b1"/><stop offset="0.42" stop-color="#a8a8a8"/><stop offset="0.495" stop-color="#adadad"/><stop offset="0.505" stop-color="#b8b8b8"/><stop offset="0.578" stop-color="#b5b5b5"/><stop offset="0.605" stop-color="#969696"/><stop offset="0.76" stop-color="#9b9b9b"/><stop offset="0.96" stop-color="#919191"/><stop offset="1" stop-color="#939393"/></linearGradient><linearGradient id="s42"><stop offset="0" stop-color="#000000"/><stop offset="0.016" stop-color="#000000"/><stop offset="0.02" stop-color="#272727"/><stop offset="0.024" stop-color="#474747"/><stop offset="0.028" stop-color="#5e5e5e"/><stop offset="0.032" stop-color="#6f6f6f"/><stop offset="0.04" stop-color="#858585"/><stop offset="0.048" stop-color="#929292"/><stop offset="0.064" stop-color="#9e9e9e"/><stop offset="0.09" stop-color="#a7a7a7"/><stop offset="0.2" stop-color="#afafaf"/><stop offset="0.32" stop-color="#afafaf"/><stop offset="0.42" stop-color="#a6a6a6"/><stop offset="0.495" stop-color="#acacac"/><stop offset="0.505" stop-color="#b6b6b6"/><stop offset="0.578" stop-color="#b3b3b3"/><stop offset="0.605" stop-color="#949494"/><stop offset="0.74" stop-color="#9a9a9a"/><stop offset="0.96" stop-color="#909090"/><stop offset="1" stop-color="#929292"/></linearGradient><linearGradient id="s43"><stop offset="0" stop-color="#000000"/><stop offset="0.016" stop-color="#000000"/><stop offset="0.02" stop-color="#242424"/><stop offset="0.024" stop-color="#434343"/><stop offset="0.028" stop-color="#5a5a5a"/><stop offset="0.032" stop-color="#6b6b6b"/><stop offset="0.036" stop-color="#787878"/><stop offset="0.044" stop-color="#898989"/><stop offset="0.056" stop-color="#969696"/><stop offset="0.08" stop-color="#a1a1a1"/><stop offset="0.13" stop-color="#a8a8a8"/><stop offset="0.24" stop-color="#adadad"/><stop offset="0.34" stop-color="#acacac"/><stop offset="0.42" stop-color="#a4a4a4"/><stop offset="0.495" stop-color="#aaaaaa"/><stop offset="0.505" stop-color="#b5b5b5"/><stop offset="0.578" stop-color="#b2b2b2"/><stop offset="0.605" stop-color="#929292"/><stop offset="0.76" stop-color="#989898"/><stop offset="0.96" stop-color="#8f8f8f"/><stop offset="1" stop-color="#909090"/></linearGradient><linearGradient id="s44"><stop offset="0" stop-color="#000000"/><stop offset="0.016" stop-color="#000000"/><stop offset="0.024" stop-color="#404040"/><stop offset="0.028" stop-color="#575757"/><stop offset="0.032" stop-color="#686868"/><stop offset="0.036" stop-color="#757575"/><stop offset="0.044" stop-color="#858585"/><stop offset="0.056" stop-color="#939393"/><stop offset="0.076" stop-color="#9c9c9c"/><stop offset="0.1" stop-color="#a1a1a1"/><stop offset="0.22" stop-color="#aaaaaa"/><stop offset="0.34" stop-color="#a9a9a9"/><stop offset="0.42" stop-color="#a2a2a2"/><stop offset="0.495" stop-color="#a9a9a9"/><stop offset="0.505" stop-color="#b3b3b3"/><stop offset="0.578" stop-color="#b0b0b0"/><stop offset="0.605" stop-color="#909090"/><stop offset="0.76" stop-color="#969696"/><stop offset="0.96" stop-color="#8e8e8e"/><stop offset="1" stop-color="#8f8f8f"/></linearGradient><linearGradient id="s45"><stop offset="0" stop-color="#000000"/><stop offset="0.016" stop-color="#000000"/><stop offset="0.024" stop-color="#3d3d3d"/><stop offset="0.028" stop-color="#545454"/><stop offset="0.032" stop-color="#656565"/><stop offset="0.036" stop-color="#727272"/><stop offset="0.044" stop-color="#838383"/><stop offset="0.06" stop-color="#939393"/><stop offset="0.09" stop-color="#9d9d9d"/><stop offset="0.19" stop-color="#a6a6a6"/><stop offset="0.34" stop-color="#a7a7a7"/><stop offset="0.42" stop-color="#a1a1a1"/><stop offset="0.495" stop-color="#a7a7a7"/><stop offset="0.505" stop-color="#b1b1b1"/><stop offset="0.578" stop-color="#aeaeae"/><stop offset="0.605" stop-color="#8f8f8f"/><stop offset="0.76" stop-color="#959595"/><stop offset="0.96" stop-color="#8d8d8d"/><stop offset="1" stop-color="#8f8f8f"/></linearGradient><linearGradient id="s46"><stop offset="0" stop-color="#000000"/><stop offset="0.016" stop-color="#000000"/><stop offset="0.024" stop-color="#3b3b3b"/><stop offset="0.028" stop-color="#525252"/><stop offset="0.032" stop-color="#636363"/><stop offset="0.036" stop-color="#707070"/><stop offset="0.044" stop-color="#818181"/><stop offset="0.06" stop-color="#919191"/><stop offset="0.08" stop-color="#999999"/><stop offset="0.13" stop-color="#a0a0a0"/><stop offset="0.24" stop-color="#a5a5a5"/><stop offset="0.36" stop-color="#a3a3a3"/><stop offset="0.42" stop-color="#9f9f9f"/><stop offset="0.495" stop-color="#a5a5a5"/><stop offset="0.505" stop-color="#afafaf"/><stop offset="0.578" stop-color="#ababab"/><stop offset="0.605" stop-color="#8e8e8e"/><stop offset="0.76" stop-color="#949494"/><stop offset="0.98" stop-color="#8d8d8d"/><stop offset="1" stop-color="#8e8e8e"/></linearGradient><linearGradient id="s47"><stop offset="0" stop-color="#000000"/><stop offset="0.016" stop-color="#000000"/><stop offset="0.02" stop-color="#1a1a1a"/><stop offset="0.024" stop-color="#393939"/><stop offset="0.028" stop-color="#505050"/><stop offset="0.032" stop-color="#616161"/><stop offset="0.036" stop-color="#6e6e6e"/><stop offset="0.044" stop-color="#7e7e7e"/><stop offset="0.056" stop-color="#8c8c8c"/><stop offset="0.08" stop-color="#979797"/><stop offset="0.13" stop-color="#9e9e9e"/><stop offset="0.24" stop-color="#a3a3a3"/><stop offset="0.36" stop-color="#a1a1a1"/><stop offset="0.42" stop-color="#9d9d9d"/><stop offset="0.495" stop-color="#a3a3a3"/><stop offset="0.505" stop-color="#acacac"/><stop offset="0.578" stop-color="#a9a9a9"/><stop offset="0.605" stop-color="#8d8d8d"/><stop offset="0.78" stop-color="#939393"/><stop offset="0.94" stop-color="#8c8c8c"/><stop offset="1" stop-color="#8d8d8d"/></linearGradient><linearGradient id="s48"><stop offset="0" stop-color="#000000"/><stop offset="0.016" stop-color="#000000"/><stop offset="0.02" stop-color="#181818"/><stop offset="0.024" stop-color="#373737"/><stop offset="0.028" stop-color="#4e4e4e"/><stop offset="0.032" stop-color="#5f5f5f"/><stop offset="0.036" stop-color="#6c6c6c"/><stop offset="0.044" stop-color="#7c7c7c"/><stop offset="0.056" stop-color="#8a8a8a"/><stop offset="0.08" stop-color="#959595"/><stop offset="0.13" stop-color="#9c9c9c"/><stop offset="0.24" stop-color="#a1a1a1"/><stop offset="0.36" stop-color="#9f9f9f"/><stop offset="0.42" stop-color="#9b9b9b"/><stop offset="0.495" stop-color="#a1a1a1"/><stop offset="0.505" stop-color="#aaaaaa"/><stop offset="0.578" stop-color="#a6a6a6"/><stop offset="0.605" stop-color="#8d8d8d"/><stop offset="0.76" stop-color="#939393"/><stop offset="0.98" stop-color="#8c8c8c"/><stop offset="1" stop-color="#8d8d8d"/></linearGradient><linearGradient id="s49"><stop offset="0" stop-color="#000000"/><stop offset="0.016" stop-color="#000000"/><stop offset="0.02" stop-color="#151515"/><stop offset="0.024" stop-color="#353535"/><stop offset="0.028" stop-color="#4c4c4c"/><stop offset="0.032" stop-color="#5d5d5d"/><stop offset="0.036" stop-color="#6a6a6a"/><stop offset="0.044" stop-color="#7a7a7a"/><stop offset="0.056" stop-color="#888888"/><stop offset="0.08" stop-color="#939393"/><stop offset="0.13" stop-color="#9a9a9a"/><stop offset="0.24" stop-color="#9f9f9f"/><stop offset="0.36" stop-color="#9d9d9d"/><stop offset="0.44" stop-color="#9b9b9b"/><stop offset="0.495" stop-color="#9f9f9f"/><stop offset="0.505" stop-color="#a7a7a7"/><stop offset="0.578" stop-color="#a4a4a4"/><stop offset="0.605" stop-color="#8c8c8c"/><stop offset="0.76" stop-color="#929292"/><stop offset="0.94" stop-color="#8b8b8b"/><stop offset="1" stop-color="#8c8c8c"/></linearGradient><linearGradient id="s50"><stop offset="0" stop-color="#000000"/><stop offset="0.016" stop-color="#000000"/><stop offset="0.02" stop-color="#131313"/><stop offset="0.024" stop-color="#333333"/><stop offset="0.028" stop-color="#4a4a4a"/><stop offset="0.032" stop-color="#5b5b5b"/><stop offset="0.036" stop-color="#686868"/><stop offset="0.044" stop-color="#787878"/><stop offset="0.056" stop-color="#868686"/><stop offset="0.08" stop-color="#919191"/><stop offset="0.13" stop-color="#989898"/><stop offset="0.24" stop-color="#9d9d9d"/><stop offset="0.36" stop-color="#9b9b9b"/><stop offset="0.44" stop-color="#999999"/><stop offset="0.495" stop-color="#9d9d9d"/><stop offset="0.505" stop-color="#a5a5a5"/><stop offset="0.578" stop-color="#a1a1a1"/><stop offset="0.605" stop-color="#8b8b8b"/><stop offset="0.76" stop-color="#919191"/><stop offset="1" stop-color="#8b8b8b"/></linearGradient><linearGradient id="s51"><stop offset="0" stop-color="#000000"/><stop offset="0.016" stop-color="#000000"/><stop offset="0.02" stop-color="#111111"/><stop offset="0.024" stop-color="#303030"/><stop offset="0.028" stop-color="#474747"/><stop offset="0.032" stop-color="#585858"/><stop offset="0.036" stop-color="#656565"/><stop offset="0.044" stop-color="#767676"/><stop offset="0.056" stop-color="#838383"/><stop offset="0.08" stop-color="#8f8f8f"/><stop offset="0.13" stop-color="#969696"/><stop offset="0.26" stop-color="#9a9a9a"/><stop offset="0.38" stop-color="#989898"/><stop offset="0.44" stop-color="#979797"/><stop offset="0.495" stop-color="#9a9a9a"/><stop offset="0.505" stop-color="#a2a2a2"/><stop offset="0.578" stop-color="#9f9f9f"/><stop offset="0.605" stop-color="#8b8b8b"/><stop offset="0.76" stop-color="#909090"/><stop offset="0.96" stop-color="#8a8a8a"/><stop offset="1" stop-color="#8b8b8b"/></linearGradient><linearGradient id="s52"><stop offset="0" stop-color="#000000"/><stop offset="0.016" stop-color="#000000"/><stop offset="0.02" stop-color="#0c0c0c"/><stop offset="0.024" stop-color="#2c2c2c"/><stop offset="0.028" stop-color="#434343"/><stop offset="0.032" stop-color="#545454"/><stop offset="0.036" stop-color="#616161"/><stop offset="0.044" stop-color="#727272"/><stop offset="0.052" stop-color="#7d7d7d"/><stop offset="0.068" stop-color="#888888"/><stop offset="0.1" stop-color="#909090"/><stop offset="0.19" stop-color="#979797"/><stop offset="0.36" stop-color="#979797"/><stop offset="0.44" stop-color="#959595"/><stop offset="0.495" stop-color="#989898"/><stop offset="0.505" stop-color="#a0a0a0"/><stop offset="0.578" stop-color="#9c9c9c"/><stop offset="0.605" stop-color="#8a8a8a"/><stop offset="0.78" stop-color="#8f8f8f"/><stop offset="0.98" stop-color="#8a8a8a"/><stop offset="1" stop-color="#8a8a8a"/></linearGradient><linearGradient id="s53"><stop offset="0" stop-color="#000000"/><stop offset="0.016" stop-color="#000000"/><stop offset="0.02" stop-color="#020202"/><stop offset="0.024" stop-color="#222222"/><stop offset="0.028" stop-color="#3a3a3a"/><stop offset="0.036" stop-color="#595959"/><stop offset="0.044" stop-color="#6b6b6b"/><stop offset="0.056" stop-color="#7b7b7b"/><stop offset="0.08" stop-color="#898989"/><stop offset="0.12" stop-color="#909090"/><stop offset="0.24" stop-color="#969696"/><stop offset="0.4" stop-color="#939393"/><stop offset="0.48" stop-color="#959595"/><stop offset="0.498" stop-color="#989898"/><stop offset="0.505" stop-color="#9d9d9d"/><stop offset="0.578" stop-color="#999999"/><stop offset="0.605" stop-color="#898989"/><stop offset="0.76" stop-color="#8e8e8e"/><stop offset="0.98" stop-color="#898989"/><stop offset="1" stop-color="#898989"/></linearGradient><linearGradient id="s54"><stop offset="0" stop-color="#000000"/><stop offset="0.02" stop-color="#000000"/><stop offset="0.024" stop-color="#0a0a0a"/><stop offset="0.028" stop-color="#232323"/><stop offset="0.032" stop-color="#363636"/><stop offset="0.036" stop-color="#454545"/><stop offset="0.044" stop-color="#5a5a5a"/><stop offset="0.052" stop-color="#696969"/><stop offset="0.068" stop-color="#7b7b7b"/><stop offset="0.09" stop-color="#878787"/><stop offset="0.13" stop-color="#8e8e8e"/><stop offset="0.24" stop-color="#939393"/><stop offset="0.4" stop-color="#909090"/><stop offset="0.495" stop-color="#929292"/><stop offset="0.505" stop-color="#999999"/><stop offset="0.578" stop-color="#969696"/><stop offset="0.605" stop-color="#888888"/><stop offset="0.78" stop-color="#8c8c8c"/><stop offset="1" stop-color="#888888"/></linearGradient><linearGradient id="s55"><stop offset="0" stop-color="#000000"/><stop offset="0.024" stop-color="#000000"/><stop offset="0.028" stop-color="#060606"/><stop offset="0.032" stop-color="#1b1b1b"/><stop offset="0.036" stop-color="#2c2c2c"/><stop offset="0.044" stop-color="#464646"/><stop offset="0.056" stop-color="#606060"/><stop offset="0.072" stop-color="#757575"/><stop offset="0.09" stop-color="#828282"/><stop offset="0.12" stop-color="#8b8b8b"/><stop offset="0.24" stop-color="#909090"/><stop offset="0.4" stop-color="#8e8e8e"/><stop offset="0.495" stop-color="#909090"/><stop offset="0.505" stop-color="#969696"/><stop offset="0.578" stop-color="#939393"/><stop offset="0.605" stop-color="#868686"/><stop offset="0.78" stop-color="#8a8a8a"/><stop offset="1" stop-color="#868686"/></linearGradient><linearGradient id="s56"><stop offset="0" stop-color="#000000"/><stop offset="0.028" stop-color="#000000"/><stop offset="0.032" stop-color="#0e0e0e"/><stop offset="0.036" stop-color="#202020"/><stop offset="0.044" stop-color="#3b3b3b"/><stop offset="0.052" stop-color="#505050"/><stop offset="0.064" stop-color="#666666"/><stop offset="0.076" stop-color="#757575"/><stop offset="0.09" stop-color="#808080"/><stop offset="0.11" stop-color="#888888"/><stop offset="0.18" stop-color="#8e8e8e"/><stop offset="0.36" stop-color="#8e8e8e"/><stop offset="0.46" stop-color="#8d8d8d"/><stop offset="0.498" stop-color="#909090"/><stop offset="0.505" stop-color="#959595"/><stop offset="0.578" stop-color="#929292"/><stop offset="0.605" stop-color="#868686"/><stop offset="0.76" stop-color="#8a8a8a"/><stop offset="1" stop-color="#868686"/></linearGradient><linearGradient id="s57"><stop offset="0" stop-color="#000000"/><stop offset="0.032" stop-color="#000000"/><stop offset="0.04" stop-color="#222222"/><stop offset="0.048" stop-color="#3c3c3c"/><stop offset="0.06" stop-color="#595959"/><stop offset="0.072" stop-color="#6c6c6c"/><stop offset="0.08" stop-color="#767676"/><stop offset="0.1" stop-color="#838383"/><stop offset="0.12" stop-color="#898989"/><stop offset="0.22" stop-color="#8e8e8e"/><stop offset="0.4" stop-color="#8c8c8c"/><stop offset="0.495" stop-color="#8d8d8d"/><stop offset="0.505" stop-color="#939393"/><stop offset="0.578" stop-color="#919191"/><stop offset="0.605" stop-color="#858585"/><stop offset="0.78" stop-color="#898989"/><stop offset="1" stop-color="#858585"/></linearGradient><linearGradient id="s58"><stop offset="0" stop-color="#000000"/><stop offset="0.032" stop-color="#000000"/><stop offset="0.036" stop-color="#020202"/><stop offset="0.044" stop-color="#232323"/><stop offset="0.056" stop-color="#474747"/><stop offset="0.068" stop-color="#606060"/><stop offset="0.08" stop-color="#727272"/><stop offset="0.1" stop-color="#818181"/><stop offset="0.13" stop-color="#898989"/><stop offset="0.24" stop-color="#8d8d8d"/><stop offset="0.4" stop-color="#8b8b8b"/><stop offset="0.495" stop-color="#8c8c8c"/><stop offset="0.505" stop-color="#929292"/><stop offset="0.578" stop-color="#909090"/><stop offset="0.605" stop-color="#848484"/><stop offset="0.78" stop-color="#888888"/><stop offset="1" stop-color="#848484"/></linearGradient><linearGradient id="s59"><stop offset="0" stop-color="#000000"/><stop offset="0.036" stop-color="#000000"/><stop offset="0.04" stop-color="#030303"/><stop offset="0.048" stop-color="#232323"/><stop offset="0.056" stop-color="#3d3d3d"/><stop offset="0.068" stop-color="#5a5a5a"/><stop offset="0.08" stop-color="#6d6d6d"/><stop offset="0.09" stop-color="#787878"/><stop offset="0.11" stop-color="#838383"/><stop offset="0.14" stop-color="#898989"/><stop offset="0.3" stop-color="#8c8c8c"/><stop offset="0.44" stop-color="#898989"/><stop offset="0.495" stop-color="#8b8b8b"/><stop offset="0.505" stop-color="#919191"/><stop offset="0.578" stop-color="#8e8e8e"/><stop offset="0.605" stop-color="#848484"/><stop offset="0.8" stop-color="#878787"/><stop offset="1" stop-color="#848484"/></linearGradient><linearGradient id="s60"><stop offset="0" stop-color="#000000"/><stop offset="0.04" stop-color="#000000"/><stop offset="0.044" stop-color="#040404"/><stop offset="0.056" stop-color="#313131"/><stop offset="0.068" stop-color="#525252"/><stop offset="0.076" stop-color="#626262"/><stop offset="0.09" stop-color="#757575"/><stop offset="0.11" stop-color="#828282"/><stop offset="0.15" stop-color="#888888"/><stop offset="0.28" stop-color="#8b8b8b"/><stop offset="0.44" stop-color="#888888"/><stop offset="0.498" stop-color="#8b8b8b"/><stop offset="0.505" stop-color="#8f8f8f"/><stop offset="0.578" stop-color="#8d8d8d"/><stop offset="0.605" stop-color="#838383"/><stop offset="0.8" stop-color="#868686"/><stop offset="1" stop-color="#838383"/></linearGradient><linearGradient id="s61"><stop offset="0" stop-color="#000000"/><stop offset="0.044" stop-color="#000000"/><stop offset="0.048" stop-color="#040404"/><stop offset="0.056" stop-color="#252525"/><stop offset="0.068" stop-color="#4a4a4a"/><stop offset="0.08" stop-color="#636363"/><stop offset="0.09" stop-color="#717171"/><stop offset="0.11" stop-color="#808080"/><stop offset="0.15" stop-color="#878787"/><stop offset="0.34" stop-color="#898989"/><stop offset="0.44" stop-color="#878787"/><stop offset="0.495" stop-color="#888888"/><stop offset="0.505" stop-color="#8d8d8d"/><stop offset="0.578" stop-color="#8b8b8b"/><stop offset="0.605" stop-color="#828282"/><stop offset="0.8" stop-color="#858585"/><stop offset="1" stop-color="#828282"/></linearGradient><linearGradient id="s62"><stop offset="0" stop-color="#000000"/><stop offset="0.048" stop-color="#000000"/><stop offset="0.052" stop-color="#060606"/><stop offset="0.06" stop-color="#272727"/><stop offset="0.068" stop-color="#414141"/><stop offset="0.08" stop-color="#5e5e5e"/><stop offset="0.09" stop-color="#6d6d6d"/><stop offset="0.11" stop-color="#7e7e7e"/><stop offset="0.15" stop-color="#858585"/><stop offset="0.28" stop-color="#888888"/><stop offset="0.44" stop-color="#858585"/><stop offset="0.495" stop-color="#868686"/><stop offset="0.505" stop-color="#8c8c8c"/><stop offset="0.578" stop-color="#8a8a8a"/><stop offset="0.605" stop-color="#808080"/><stop offset="0.78" stop-color="#848484"/><stop offset="1" stop-color="#808080"/></linearGradient><linearGradient id="s63"><stop offset="0" stop-color="#000000"/><stop offset="0.052" stop-color="#000000"/><stop offset="0.056" stop-color="#090909"/><stop offset="0.06" stop-color="#1b1b1b"/><stop offset="0.068" stop-color="#383838"/><stop offset="0.076" stop-color="#4f4f4f"/><stop offset="0.08" stop-color="#585858"/><stop offset="0.09" stop-color="#696969"/><stop offset="0.1" stop-color="#747474"/><stop offset="0.12" stop-color="#7f7f7f"/><stop offset="0.16" stop-color="#848484"/><stop offset="0.34" stop-color="#868686"/><stop offset="0.44" stop-color="#838383"/><stop offset="0.495" stop-color="#848484"/><stop offset="0.505" stop-color="#8a8a8a"/><stop offset="0.578" stop-color="#888888"/><stop offset="0.61" stop-color="#7f7f7f"/><stop offset="0.82" stop-color="#828282"/><stop offset="1" stop-color="#7f7f7f"/></linearGradient><linearGradient id="s64"><stop offset="0" stop-color="#000000"/><stop offset="0.056" stop-color="#000000"/><stop offset="0.072" stop-color="#3c3c3c"/><stop offset="0.08" stop-color="#525252"/><stop offset="0.09" stop-color="#656565"/><stop offset="0.1" stop-color="#717171"/><stop offset="0.11" stop-color="#797979"/><stop offset="0.13" stop-color="#808080"/><stop offset="0.22" stop-color="#848484"/><stop offset="0.4" stop-color="#828282"/><stop offset="0.495" stop-color="#838383"/><stop offset="0.505" stop-color="#888888"/><stop offset="0.578" stop-color="#868686"/><stop offset="0.61" stop-color="#7e7e7e"/><stop offset="0.78" stop-color="#818181"/><stop offset="1" stop-color="#7e7e7e"/></linearGradient><linearGradient id="s65"><stop offset="0" stop-color="#000000"/><stop offset="0.056" stop-color="#000000"/><stop offset="0.06" stop-color="#020202"/><stop offset="0.068" stop-color="#252525"/><stop offset="0.076" stop-color="#404040"/><stop offset="0.08" stop-color="#4b4b4b"/><stop offset="0.09" stop-color="#616161"/><stop offset="0.1" stop-color="#6e6e6e"/><stop offset="0.12" stop-color="#7b7b7b"/><stop offset="0.16" stop-color="#818181"/><stop offset="0.32" stop-color="#838383"/><stop offset="0.44" stop-color="#808080"/><stop offset="0.498" stop-color="#828282"/><stop offset="0.505" stop-color="#868686"/><stop offset="0.578" stop-color="#848484"/><stop offset="0.61" stop-color="#7c7c7c"/><stop offset="0.8" stop-color="#7f7f7f"/><stop offset="1" stop-color="#7c7c7c"/></linearGradient><linearGradient id="s66"><stop offset="0" stop-color="#000000"/><stop offset="0.06" stop-color="#000000"/><stop offset="0.064" stop-color="#090909"/><stop offset="0.072" stop-color="#2b2b2b"/><stop offset="0.08" stop-color="#454545"/><stop offset="0.09" stop-color="#5c5c5c"/><stop offset="0.1" stop-color="#6b6b6b"/><stop offset="0.12" stop-color="#797979"/><stop offset="0.16" stop-color="#7e7e7e"/><stop offset="0.32" stop-color="#808080"/><stop offset="0.44" stop-color="#7d7d7d"/><stop offset="0.498" stop-color="#808080"/><stop offset="0.505" stop-color="#848484"/><stop offset="0.578" stop-color="#828282"/><stop offset="0.61" stop-color="#7a7a7a"/><stop offset="0.78" stop-color="#7d7d7d"/><stop offset="1" stop-color="#7a7a7a"/></linearGradient><linearGradient id="s67"><stop offset="0" stop-color="#000000"/><stop offset="0.064" stop-color="#000000"/><stop offset="0.076" stop-color="#313131"/><stop offset="0.08" stop-color="#3e3e3e"/><stop offset="0.09" stop-color="#575757"/><stop offset="0.1" stop-color="#666666"/><stop offset="0.11" stop-color="#707070"/><stop offset="0.13" stop-color="#787878"/><stop offset="0.18" stop-color="#7c7c7c"/><stop offset="0.36" stop-color="#7c7c7c"/><stop offset="0.48" stop-color="#7b7b7b"/><stop offset="0.498" stop-color="#7d7d7d"/><stop offset="0.505" stop-color="#818181"/><stop offset="0.578" stop-color="#7f7f7f"/><stop offset="0.61" stop-color="#777777"/><stop offset="0.78" stop-color="#7a7a7a"/><stop offset="1" stop-color="#777777"/></linearGradient><linearGradient id="s68"><stop offset="0" stop-color="#000000"/><stop offset="0.064" stop-color="#000000"/><stop offset="0.068" stop-color="#060606"/><stop offset="0.076" stop-color="#282828"/><stop offset="0.08" stop-color="#353535"/><stop offset="0.09" stop-color="#505050"/><stop offset="0.1" stop-color="#606060"/><stop offset="0.11" stop-color="#6a6a6a"/><stop offset="0.13" stop-color="#737373"/><stop offset="0.19" stop-color="#787878"/><stop offset="0.4" stop-color="#767676"/><stop offset="0.495" stop-color="#777777"/><stop offset="0.505" stop-color="#7c7c7c"/><stop offset="0.578" stop-color="#7a7a7a"/><stop offset="0.61" stop-color="#727272"/><stop offset="0.78" stop-color="#757575"/><stop offset="1" stop-color="#727272"/></linearGradient><linearGradient id="s69"><stop offset="0" stop-color="#000000"/><stop offset="0.068" stop-color="#000000"/><stop offset="0.072" stop-color="#0a0a0a"/><stop offset="0.08" stop-color="#292929"/><stop offset="0.09" stop-color="#444444"/><stop offset="0.1" stop-color="#565656"/><stop offset="0.11" stop-color="#606060"/><stop offset="0.13" stop-color="#696969"/><stop offset="0.19" stop-color="#6e6e6e"/><stop offset="0.36" stop-color="#6e6e6e"/><stop offset="0.46" stop-color="#6c6c6c"/><stop offset="0.495" stop-color="#6d6d6d"/><stop offset="0.505" stop-color="#727272"/><stop offset="0.578" stop-color="#717171"/><stop offset="0.61" stop-color="#686868"/><stop offset="0.82" stop-color="#6b6b6b"/><stop offset="1" stop-color="#686868"/></linearGradient><linearGradient id="s70"><stop offset="0" stop-color="#000000"/><stop offset="0.076" stop-color="#010101"/><stop offset="0.08" stop-color="#101010"/><stop offset="0.09" stop-color="#2d2d2d"/><stop offset="0.1" stop-color="#3f3f3f"/><stop offset="0.11" stop-color="#4a4a4a"/><stop offset="0.13" stop-color="#535353"/><stop offset="0.17" stop-color="#575757"/><stop offset="0.32" stop-color="#595959"/><stop offset="0.44" stop-color="#565656"/><stop offset="0.495" stop-color="#575757"/><stop offset="0.505" stop-color="#5c5c5c"/><stop offset="0.578" stop-color="#5a5a5a"/><stop offset="0.61" stop-color="#525252"/><stop offset="0.8" stop-color="#555555"/><stop offset="1" stop-color="#525252"/></linearGradient><linearGradient id="s71"><stop offset="0" stop-color="#000000"/><stop offset="0.09" stop-color="#000000"/><stop offset="0.1" stop-color="#050505"/><stop offset="0.11" stop-color="#101010"/><stop offset="0.13" stop-color="#1a1a1a"/><stop offset="0.2" stop-color="#1f1f1f"/><stop offset="0.36" stop-color="#1e1e1e"/><stop offset="0.48" stop-color="#1d1d1d"/><stop offset="0.495" stop-color="#1d1d1d"/><stop offset="0.505" stop-color="#232323"/><stop offset="0.578" stop-color="#212121"/><stop offset="0.605" stop-color="#181818"/><stop offset="0.76" stop-color="#1c1c1c"/><stop offset="1" stop-color="#181818"/></linearGradient><linearGradient id="s72"><stop offset="0" stop-color="#000000"/><stop offset="1" stop-color="#000000"/></linearGradient><linearGradient id="s73"><stop offset="0" stop-color="#000000"/><stop offset="1" stop-color="#000000"/></linearGradient><linearGradient id="tbg"><stop offset="0" stop-color="#b4b4b4"/><stop offset="0.5" stop-color="#b4b4b4"/><stop offset="1" stop-color="#a0a0a0"/></linearGradient><linearGradient id="stripes" gradientUnits="userSpaceOnUse" x1="106.1" y1="0" x2="141.731" y2="0" spreadMethod="repeat"><stop offset="0" stop-color="#000" stop-opacity=".07"/><stop offset=".5" stop-color="#fff" stop-opacity=".07"/><stop offset="1" stop-color="#000" stop-opacity=".07"/></linearGradient><radialGradient id="star"><stop offset="0" stop-color="#fff"/><stop offset="0.5" stop-color="#fff"/><stop offset="0.75" stop-color="#ffef80" stop-opacity="0.7"/><stop offset="1" stop-color="#ffd000" stop-opacity="0"/></radialGradient><filter id="bl4" x="-30%" y="-80%" width="160%" height="260%"><feGaussianBlur stdDeviation="3.2"/></filter><filter id="bl3" x="-20%" y="-60%" width="140%" height="220%"><feGaussianBlur stdDeviation="1.3"/></filter><filter id="bl1"><feGaussianBlur stdDeviation="0.8"/></filter><filter id="bl2" x="-20%" y="-60%" width="140%" height="220%"><feGaussianBlur stdDeviation="2"/></filter><clipPath id="imclip"><rect x="106.1" y="175.7" width="570.1" height="570.1"/></clipPath></defs><g clip-path="url(#imclip)"><g filter="url(#hotnoise)"><rect x="106.1" y="175.00" width="570.1" height="10.00" fill="url(#s0)"/><rect x="106.1" y="185.00" width="570.1" height="10.00" fill="url(#s1)"/><rect x="106.1" y="195.00" width="570.1" height="9.00" fill="url(#s2)"/><rect x="106.1" y="204.00" width="570.1" height="10.00" fill="url(#s3)"/><rect x="106.1" y="214.00" width="570.1" height="9.00" fill="url(#s4)"/><rect x="106.1" y="223.00" width="570.1" height="10.00" fill="url(#s5)"/><rect x="106.1" y="233.00" width="570.1" height="9.00" fill="url(#s6)"/><rect x="106.1" y="242.00" width="570.1" height="10.00" fill="url(#s7)"/><rect x="106.1" y="252.00" width="570.1" height="9.00" fill="url(#s8)"/><rect x="106.1" y="261.00" width="570.1" height="10.00" fill="url(#s9)"/><rect x="106.1" y="271.00" width="570.1" height="9.00" fill="url(#s10)"/><rect x="106.1" y="280.00" width="570.1" height="10.00" fill="url(#s11)"/><rect x="106.1" y="290.00" width="570.1" height="9.00" fill="url(#s12)"/><rect x="106.1" y="299.00" width="570.1" height="10.00" fill="url(#s13)"/><rect x="106.1" y="309.00" width="570.1" height="9.00" fill="url(#s14)"/><rect x="106.1" y="318.00" width="570.1" height="10.00" fill="url(#s15)"/><rect x="106.1" y="328.00" width="570.1" height="9.00" fill="url(#s16)"/><rect x="106.1" y="337.00" width="570.1" height="10.00" fill="url(#s17)"/><rect x="106.1" y="347.00" width="570.1" height="9.00" fill="url(#s18)"/><rect x="106.1" y="356.00" width="570.1" height="10.00" fill="url(#s19)"/><rect x="106.1" y="366.00" width="570.1" height="9.00" fill="url(#s20)"/><rect x="106.1" y="375.00" width="570.1" height="10.00" fill="url(#s21)"/><rect x="106.1" y="385.00" width="570.1" height="9.00" fill="url(#s22)"/><rect x="106.1" y="394.00" width="570.1" height="10.00" fill="url(#s23)"/><rect x="106.1" y="404.00" width="570.1" height="9.00" fill="url(#s24)"/><rect x="106.1" y="413.00" width="570.1" height="10.00" fill="url(#s25)"/><rect x="106.1" y="423.00" width="570.1" height="9.00" fill="url(#s26)"/><rect x="106.1" y="432.00" width="570.1" height="10.00" fill="url(#s27)"/><rect x="106.1" y="442.00" width="570.1" height="9.00" fill="url(#s28)"/><rect x="106.1" y="451.00" width="570.1" height="10.00" fill="url(#s29)"/></g><g filter="url(#hotnoiseB)"><rect x="106.1" y="461.00" width="570.1" height="9.00" fill="url(#s30)"/><rect x="106.1" y="470.00" width="570.1" height="10.00" fill="url(#s31)"/><rect x="106.1" y="480.00" width="570.1" height="9.00" fill="url(#s32)"/><rect x="106.1" y="489.00" width="570.1" height="10.00" fill="url(#s33)"/><rect x="106.1" y="499.00" width="570.1" height="9.00" fill="url(#s34)"/><rect x="106.1" y="508.00" width="570.1" height="10.00" fill="url(#s35)"/><rect x="106.1" y="518.00" width="570.1" height="9.00" fill="url(#s36)"/><rect x="106.1" y="527.00" width="570.1" height="10.00" fill="url(#s37)"/><rect x="106.1" y="537.00" width="570.1" height="9.00" fill="url(#s38)"/><rect x="106.1" y="546.00" width="570.1" height="10.00" fill="url(#s39)"/><rect x="106.1" y="556.00" width="570.1" height="9.00" fill="url(#s40)"/><rect x="106.1" y="565.00" width="570.1" height="10.00" fill="url(#s41)"/><rect x="106.1" y="575.00" width="570.1" height="9.00" fill="url(#s42)"/><rect x="106.1" y="584.00" width="570.1" height="10.00" fill="url(#s43)"/><rect x="106.1" y="594.00" width="570.1" height="9.00" fill="url(#s44)"/><rect x="106.1" y="603.00" width="570.1" height="10.00" fill="url(#s45)"/><rect x="106.1" y="613.00" width="570.1" height="9.00" fill="url(#s46)"/><rect x="106.1" y="622.00" width="570.1" height="10.00" fill="url(#s47)"/><rect x="106.1" y="632.00" width="570.1" height="9.00" fill="url(#s48)"/><rect x="106.1" y="641.00" width="570.1" height="10.00" fill="url(#s49)"/><rect x="106.1" y="651.00" width="570.1" height="9.00" fill="url(#s50)"/><rect x="106.1" y="660.00" width="570.1" height="10.00" fill="url(#s51)"/><rect x="106.1" y="670.00" width="570.1" height="9.00" fill="url(#s52)"/><rect x="106.1" y="679.00" width="570.1" height="10.00" fill="url(#s53)"/><rect x="106.1" y="689.00" width="570.1" height="11.00" fill="url(#s54)"/><rect x="106.1" y="700.00" width="570.1" height="3.00" fill="url(#s55)"/><rect x="106.1" y="703.00" width="570.1" height="2.00" fill="url(#s56)"/><rect x="106.1" y="705.00" width="570.1" height="3.00" fill="url(#s57)"/><rect x="106.1" y="708.00" width="570.1" height="2.00" fill="url(#s58)"/><rect x="106.1" y="710.00" width="570.1" height="3.00" fill="url(#s59)"/><rect x="106.1" y="713.00" width="570.1" height="2.00" fill="url(#s60)"/><rect x="106.1" y="715.00" width="570.1" height="3.00" fill="url(#s61)"/><rect x="106.1" y="718.00" width="570.1" height="2.00" fill="url(#s62)"/><rect x="106.1" y="720.00" width="570.1" height="3.00" fill="url(#s63)"/><rect x="106.1" y="723.00" width="570.1" height="2.00" fill="url(#s64)"/><rect x="106.1" y="725.00" width="570.1" height="3.00" fill="url(#s65)"/><rect x="106.1" y="728.00" width="570.1" height="2.00" fill="url(#s66)"/><rect x="106.1" y="730.00" width="570.1" height="3.00" fill="url(#s67)"/><rect x="106.1" y="733.00" width="570.1" height="2.00" fill="url(#s68)"/><rect x="106.1" y="735.00" width="570.1" height="3.00" fill="url(#s69)"/><rect x="106.1" y="738.00" width="570.1" height="2.00" fill="url(#s70)"/><rect x="106.1" y="740.00" width="570.1" height="3.00" fill="url(#s71)"/><rect x="106.1" y="743.00" width="570.1" height="2.00" fill="url(#s72)"/><rect x="106.1" y="745.00" width="570.1" height="2.00" fill="url(#s73)"/><rect x="134.6" y="495.0" width="541.6" height="230.9" fill="url(#stripes)" opacity="0.45"/><rect x="134.6" y="609.0" width="541.6" height="116.9" fill="url(#stripes)" opacity="0.45"/><ellipse cx="125.7" cy="731" rx="14" ry="5.5" fill="#000" fill-opacity="0.55" filter="url(#bl4)"/><ellipse cx="161.3" cy="733" rx="16" ry="5.5" fill="#000" fill-opacity="0.55" filter="url(#bl4)"/><ellipse cx="197.0" cy="733" rx="14" ry="5.5" fill="#000" fill-opacity="0.55" filter="url(#bl4)"/><ellipse cx="232.6" cy="731" rx="16" ry="5.5" fill="#000" fill-opacity="0.55" filter="url(#bl4)"/><ellipse cx="268.2" cy="733" rx="14" ry="5.5" fill="#000" fill-opacity="0.55" filter="url(#bl4)"/><ellipse cx="303.9" cy="733" rx="16" ry="5.5" fill="#000" fill-opacity="0.55" filter="url(#bl4)"/><ellipse cx="339.5" cy="731" rx="14" ry="5.5" fill="#000" fill-opacity="0.55" filter="url(#bl4)"/><ellipse cx="375.1" cy="733" rx="16" ry="5.5" fill="#000" fill-opacity="0.55" filter="url(#bl4)"/><ellipse cx="410.7" cy="733" rx="14" ry="5.5" fill="#000" fill-opacity="0.55" filter="url(#bl4)"/><ellipse cx="446.4" cy="731" rx="16" ry="5.5" fill="#000" fill-opacity="0.55" filter="url(#bl4)"/><ellipse cx="482.0" cy="733" rx="14" ry="5.5" fill="#000" fill-opacity="0.32" filter="url(#bl4)"/><ellipse cx="517.6" cy="733" rx="16" ry="5.5" fill="#000" fill-opacity="0.32" filter="url(#bl4)"/><ellipse cx="553.3" cy="731" rx="14" ry="5.5" fill="#000" fill-opacity="0.32" filter="url(#bl4)"/><ellipse cx="588.9" cy="733" rx="16" ry="5.5" fill="#000" fill-opacity="0.32" filter="url(#bl4)"/><ellipse cx="624.5" cy="733" rx="14" ry="5.5" fill="#000" fill-opacity="0.32" filter="url(#bl4)"/><ellipse cx="660.2" cy="731" rx="16" ry="5.5" fill="#000" fill-opacity="0.32" filter="url(#bl4)"/><rect x="107" y="594" width="288" height="1" fill="#000" fill-opacity="0.13"/><rect x="107" y="583" width="250" height="1" fill="#fff" fill-opacity="0.08"/><rect x="433" y="639" width="243" height="1" fill="#000" fill-opacity="0.13"/></g><g filter="url(#hotnoise2)"><rect x="128" y="176.4" width="549" height="17.6" fill="url(#tbg)"/><ellipse cx="145.0" cy="189.5" rx="13" ry="3.4" fill="#000" fill-opacity="0.62" filter="url(#bl3)"/><ellipse cx="161.0" cy="178.6" rx="10" ry="2.2" fill="#000" fill-opacity="0.5" filter="url(#bl3)"/><ellipse cx="180.6" cy="189.4" rx="10" ry="3.4" fill="#000" fill-opacity="0.62" filter="url(#bl3)"/><ellipse cx="216.2" cy="189.1" rx="10" ry="3.4" fill="#000" fill-opacity="0.62" filter="url(#bl3)"/><ellipse cx="232.2" cy="178.6" rx="10" ry="2.2" fill="#000" fill-opacity="0.5" filter="url(#bl3)"/><ellipse cx="251.8" cy="188.9" rx="13" ry="3.4" fill="#000" fill-opacity="0.62" filter="url(#bl3)"/><ellipse cx="287.4" cy="188.5" rx="10" ry="3.4" fill="#000" fill-opacity="0.62" filter="url(#bl3)"/><ellipse cx="303.4" cy="178.6" rx="10" ry="2.2" fill="#000" fill-opacity="0.5" filter="url(#bl3)"/><ellipse cx="323.0" cy="188.1" rx="10" ry="3.4" fill="#000" fill-opacity="0.62" filter="url(#bl3)"/><ellipse cx="358.6" cy="187.7" rx="13" ry="3.4" fill="#000" fill-opacity="0.62" filter="url(#bl3)"/><ellipse cx="374.6" cy="178.6" rx="10" ry="2.2" fill="#000" fill-opacity="0.5" filter="url(#bl3)"/><ellipse cx="394.2" cy="187.2" rx="10" ry="3.4" fill="#000" fill-opacity="0.62" filter="url(#bl3)"/><ellipse cx="429.8" cy="186.7" rx="10" ry="3.4" fill="#000" fill-opacity="0.62" filter="url(#bl3)"/><ellipse cx="445.8" cy="178.6" rx="10" ry="2.2" fill="#000" fill-opacity="0.5" filter="url(#bl3)"/><ellipse cx="465.4" cy="186.1" rx="13" ry="3.4" fill="#000" fill-opacity="0.62" filter="url(#bl3)"/><ellipse cx="501.0" cy="185.6" rx="10" ry="3.4" fill="#000" fill-opacity="0.62" filter="url(#bl3)"/><ellipse cx="517.0" cy="178.6" rx="10" ry="2.2" fill="#000" fill-opacity="0.5" filter="url(#bl3)"/><ellipse cx="536.6" cy="185.0" rx="10" ry="3.4" fill="#000" fill-opacity="0.62" filter="url(#bl3)"/><ellipse cx="572.2" cy="184.3" rx="13" ry="3.4" fill="#000" fill-opacity="0.62" filter="url(#bl3)"/><ellipse cx="607.8" cy="183.7" rx="10" ry="3.4" fill="#000" fill-opacity="0.45" filter="url(#bl3)"/><ellipse cx="643.4" cy="183.0" rx="10" ry="3.4" fill="#000" fill-opacity="0.45" filter="url(#bl3)"/></g><circle cx="123" cy="200" r="5.6" fill="url(#star)" opacity="1"/><circle cx="231" cy="208" r="10.5" fill="url(#star)" opacity="1"/><circle cx="376" cy="273" r="7.1" fill="url(#star)" opacity="1"/><circle cx="318" cy="337" r="3.7" fill="url(#star)" opacity="0.9"/><circle cx="236" cy="350" r="2.9" fill="url(#star)" opacity="0.8"/><circle cx="365" cy="336" r="2.3" fill="url(#star)" opacity="0.7"/><circle cx="569" cy="334" r="2.3" fill="url(#star)" opacity="0.8"/><circle cx="310" cy="497" r="3.7" fill="url(#star)" opacity="0.9"/><circle cx="175" cy="505" r="2.8" fill="url(#star)" opacity="0.8"/><circle cx="184" cy="527" r="2.8" fill="url(#star)" opacity="0.8"/><circle cx="529" cy="528" r="4.7" fill="url(#star)" opacity="1"/><circle cx="572" cy="527" r="2.9" fill="url(#star)" opacity="0.8"/><circle cx="172" cy="567" r="4.0" fill="url(#star)" opacity="0.9"/><circle cx="312" cy="609" r="6.5" fill="url(#star)" opacity="1"/><circle cx="496" cy="664" r="4.3" fill="url(#star)" opacity="0.75"/><circle cx="468" cy="690" r="3.1" fill="url(#star)" opacity="0.9"/><circle cx="658" cy="672" r="2.9" fill="url(#star)" opacity="0.9"/><circle cx="664" cy="684" r="2.2" fill="url(#star)" opacity="0.8"/><circle cx="419" cy="553" r="2.2" fill="url(#star)" opacity="0.7"/><circle cx="108.5" cy="680" r="2.5" fill="url(#star)" opacity="0.8"/><circle cx="467" cy="669" r="3.2" fill="#100" filter="url(#bl1)"/><circle cx="469" cy="662" r="1.6" fill="#100"/><path d="M668.3 744.4L675.2 733.2L675.4 737.5L670.8 744.6Z" fill="#fff"/></g>
<path d="M391.5 170V752M100 461.5H682" stroke="#0000ff" stroke-width="1.1" fill="none"/>
<path d="M106.1 175.7H676.2V745.7H106.1ZM106.24 745.7v7.3M106.1 745.56h-7.3M175.83 745.7v7.3M106.1 675.97h-7.3M245.42 745.7v7.3M106.1 606.38h-7.3M315.02 745.7v7.3M106.1 536.78h-7.3M384.61 745.7v7.3M106.1 467.19h-7.3M454.20 745.7v7.3M106.1 397.60h-7.3M523.79 745.7v7.3M106.1 328.01h-7.3M593.39 745.7v7.3M106.1 258.41h-7.3M662.98 745.7v7.3M106.1 188.82h-7.3" stroke="#000" stroke-width="1.75" fill="none" stroke-linejoin="miter"/>
<text x="106.2" y="768.8" font-size="9.72" text-anchor="middle">0</text>
<text x="91.0" y="749.5" font-size="9.72" text-anchor="end">0</text>
<text x="175.8" y="768.8" font-size="9.72" text-anchor="middle">250</text>
<text x="91.0" y="679.9" font-size="9.72" text-anchor="end">250</text>
<text x="245.4" y="768.8" font-size="9.72" text-anchor="middle">500</text>
<text x="91.0" y="610.3" font-size="9.72" text-anchor="end">500</text>
<text x="315.0" y="768.8" font-size="9.72" text-anchor="middle">750</text>
<text x="91.0" y="540.7" font-size="9.72" text-anchor="end">750</text>
<text x="384.6" y="768.8" font-size="9.72" text-anchor="middle">1000</text>
<text x="91.0" y="471.1" font-size="9.72" text-anchor="end">1000</text>
<text x="454.2" y="768.8" font-size="9.72" text-anchor="middle">1250</text>
<text x="91.0" y="401.5" font-size="9.72" text-anchor="end">1250</text>
<text x="523.8" y="768.8" font-size="9.72" text-anchor="middle">1500</text>
<text x="91.0" y="331.9" font-size="9.72" text-anchor="end">1500</text>
<text x="593.4" y="768.8" font-size="9.72" text-anchor="middle">1750</text>
<text x="91.0" y="262.3" font-size="9.72" text-anchor="end">1750</text>
<text x="663.0" y="768.8" font-size="9.72" text-anchor="middle">2000</text>
<text x="91.0" y="192.7" font-size="9.72" text-anchor="end">2000</text>
<text x="391.5" y="786.8" font-size="10.42" text-anchor="middle">X</text>
<text transform="translate(53.0 461.5) rotate(-90)" font-size="10.42" text-anchor="middle">Y</text>
<rect x="712.1" y="113.15" width="34.69999999999993" height="695.5500000000001" fill="url(#hot)"/>
<path d="M712.1 113.15H746.8V808.7H712.1ZM746.8 733.80h7.3M746.8 645.38h7.3M746.8 556.96h7.3M746.8 468.54h7.3M746.8 380.11h7.3M746.8 291.69h7.3M746.8 203.27h7.3M746.8 114.85h7.3" stroke="#000" stroke-width="1.75" fill="none"/>
<text x="762.2" y="737.3" font-size="9.72" text-anchor="start">300</text>
<text x="762.2" y="648.9" font-size="9.72" text-anchor="start">310</text>
<text x="762.2" y="560.5" font-size="9.72" text-anchor="start">320</text>
<text x="762.2" y="472.1" font-size="9.72" text-anchor="start">330</text>
<text x="762.2" y="383.7" font-size="9.72" text-anchor="start">340</text>
<text x="762.2" y="295.2" font-size="9.72" text-anchor="start">350</text>
<text x="762.2" y="206.8" font-size="9.72" text-anchor="start">360</text>
<text x="762.2" y="118.4" font-size="9.72" text-anchor="start">370</text>
<path d="M913.50 233V231.4H919.09V226.0H924.68V218.9H930.28V217.1H935.87V212.9H941.46V210.0H947.05V207.8H952.64V205.0H958.24V200.9H963.83V198.1H969.42V196.0H975.01V192.9H980.60V189.9H986.20V185.1H991.79V179.1H997.38V172.8H1002.97V166.0H1008.56V160.0H1014.16V154.0H1019.75V146.1H1025.34V136.8H1030.93V128.9H1036.52V122.8H1042.12V119.9H1047.71V118.8H1053.30V120.7H1058.89V127.7H1064.48V138.9H1070.08V155.1H1075.67V172.8H1081.26V189.7H1086.85V200.9H1092.44V203.8H1098.04V205.9H1103.63V206.6H1109.22V208.9H1114.81V210.8H1120.40V211.8H1126.00V213.8H1131.59V213.8H1137.18V213.8H1142.77V216.8H1148.36V218.0H1153.96V219.8H1159.55V222.0H1165.14V222.0H1170.73V222.9H1176.32V225.7H1181.92V182.7H1185.00" stroke="#0000ff" stroke-width="1.75" fill="none" stroke-linejoin="miter"/>
<path d="M911.4 113.0H1185.0V233.0H911.4ZM913.80 233.0v7.3M973.00 233.0v7.3M1032.20 233.0v7.3M1091.40 233.0v7.3M1150.60 233.0v7.3M911.4 232.10h-7.3M911.4 203.05h-7.3M911.4 174.00h-7.3M911.4 144.95h-7.3M911.4 115.90h-7.3" stroke="#000" stroke-width="1.75" fill="none"/>
<text x="913.8" y="256.0" font-size="9.72" text-anchor="middle">100</text>
<text x="1032.2" y="256.0" font-size="9.72" text-anchor="middle">300</text>
<text x="1150.6" y="256.0" font-size="9.72" text-anchor="middle">500</text>
<text x="896.6" y="235.7" font-size="9.72" text-anchor="end">2</text>
<text x="896.6" y="206.6" font-size="9.72" text-anchor="end">3</text>
<text x="896.6" y="177.6" font-size="9.72" text-anchor="end">4</text>
<text x="896.6" y="148.5" font-size="9.72" text-anchor="end">5</text>
<text x="896.6" y="119.4" font-size="9.72" text-anchor="end">6</text>
<text x="1048.9" y="273.6" font-size="10.42" text-anchor="middle">counts</text>
<text transform="translate(877.8 173.6) rotate(-90)" font-size="10.42" text-anchor="middle">log frequency</text>
<text transform="translate(1194.2 174.8) rotate(90)" font-size="10.42" text-anchor="middle">histogram (detail)</text>
<path d="M912.6 405.2H924.8V291.0H930.40V352.9H936.00V359.7H941.60V360.9H947.20V362.9H952.80V364.8H958.40V368.1H964.00V370.0H969.60V372.6H975.20V373.9H980.80V376.8H986.40V377.8H992.00V380.3H997.60V383.9H1003.20V385.0H1008.80V383.9H1014.40V389.0H1020.00V394.8H1025.60V389.9H1031.20V399.9H1036.80V399.9H1042.40V405.2H1048.00V405.2H1053.60V390.8H1059.20V405.2H1064.80V405.2H1070.40V399.9H1076.00V405.2H1081.60H1185.0" stroke="#0000ff" stroke-width="1.75" fill="none" stroke-linejoin="miter"/>
<path d="M911.4 285.2H1185.0V405.2H911.4ZM928.90 405.2v7.3M966.20 405.2v7.3M1003.50 405.2v7.3M1040.80 405.2v7.3M1078.10 405.2v7.3M1115.40 405.2v7.3M1152.70 405.2v7.3M911.4 405.20h-7.3M911.4 370.80h-7.3M911.4 336.40h-7.3M911.4 302.00h-7.3" stroke="#000" stroke-width="1.75" fill="none"/>
<text x="928.9" y="428.2" font-size="9.72" text-anchor="middle">0</text>
<text x="1003.5" y="428.2" font-size="9.72" text-anchor="middle">20000</text>
<text x="1078.1" y="428.2" font-size="9.72" text-anchor="middle">40000</text>
<text x="1152.7" y="428.2" font-size="9.72" text-anchor="middle">60000</text>
<text x="896.6" y="408.8" font-size="9.72" text-anchor="end">0</text>
<text x="896.6" y="374.4" font-size="9.72" text-anchor="end">2</text>
<text x="896.6" y="339.9" font-size="9.72" text-anchor="end">4</text>
<text x="896.6" y="305.6" font-size="9.72" text-anchor="end">6</text>
<text x="1048.9" y="445.8" font-size="10.42" text-anchor="middle">counts</text>
<text transform="translate(877.8 345.8) rotate(-90)" font-size="10.42" text-anchor="middle">log frequency</text>
<text transform="translate(1194.2 347.0) rotate(90)" font-size="10.42" text-anchor="middle">histogram (full)</text>
<polyline points="911.9,636.5 912.0,636.5 912.2,636.5 912.3,589.8 912.4,588.1 912.6,589.6 912.7,585.9 912.8,581.7 913.0,587.1 913.1,587.0 913.2,583.5 913.4,583.5 913.5,584.2 913.6,587.4 913.8,584.4 913.9,581.8 914.0,588.2 914.2,585.7 914.3,589.7 914.4,587.9 914.6,589.5 914.7,584.2 914.8,587.7 914.9,582.8 915.1,583.1 915.2,583.8 915.3,591.2 915.5,584.7 915.6,582.5 915.7,582.0 915.9,586.9 916.0,584.1 916.1,585.4 916.3,584.7 916.4,578.9 916.5,584.7 916.7,582.1 916.8,579.7 916.9,584.3 917.1,582.9 917.2,581.9 917.3,581.6 917.5,585.4 917.6,581.4 917.7,577.2 917.9,586.3 918.0,578.7 918.1,580.7 918.3,583.0 918.4,574.4 918.5,578.4 918.7,584.5 918.8,580.3 918.9,578.6 919.1,581.0 919.2,578.4 919.3,580.4 919.5,578.2 919.6,575.5 919.7,582.2 919.9,579.5 920.0,581.5 920.1,579.0 920.3,582.9 920.4,580.5 920.5,579.3 920.7,576.1 920.8,575.0 920.9,582.4 921.0,580.9 921.2,576.2 921.3,584.5 921.4,579.9 921.6,578.7 921.7,575.0 921.8,576.6 922.0,579.8 922.1,580.0 922.2,579.9 922.4,573.9 922.5,579.8 922.6,579.3 922.8,577.3 922.9,579.0 923.0,579.2 923.2,582.1 923.3,578.7 923.4,580.1 923.6,575.4 923.7,577.2 923.8,579.5 924.0,577.4 924.1,580.2 924.2,576.0 924.4,579.0 924.5,577.6 924.6,583.6 924.8,578.6 924.9,584.7 925.0,585.5 925.2,580.0 925.3,581.8 925.4,578.5 925.6,571.4 925.7,581.3 925.8,580.7 926.0,578.2 926.1,577.0 926.2,579.0 926.4,579.1 926.5,576.3 926.6,577.1 926.8,581.8 926.9,578.1 927.0,577.8 927.1,580.9 927.3,576.7 927.4,580.6 927.5,575.0 927.7,577.4 927.8,577.5 927.9,579.0 928.1,577.6 928.2,583.4 928.3,580.5 928.5,575.9 928.6,583.5 928.7,574.1 928.9,582.3 929.0,574.3 929.1,579.1 929.3,574.2 929.4,576.0 929.5,580.7 929.7,571.6 929.8,570.5 929.9,575.2 930.1,575.9 930.2,576.1 930.3,578.5 930.5,572.0 930.6,577.3 930.7,575.5 930.9,578.1 931.0,577.5 931.1,579.4 931.3,571.9 931.4,576.1 931.5,572.3 931.7,575.5 931.8,577.7 931.9,576.7 932.1,577.3 932.2,575.2 932.3,576.4 932.5,576.4 932.6,579.4 932.7,577.7 932.9,570.5 933.0,577.7 933.1,578.8 933.2,574.1 933.4,570.6 933.5,579.3 933.6,575.0 933.8,576.6 933.9,579.8 934.0,572.0 934.2,574.2 934.3,573.8 934.4,576.4 934.6,572.7 934.7,575.9 934.8,575.1 935.0,577.6 935.1,528.4 935.2,531.0 935.4,574.9 935.5,572.9 935.6,573.9 935.8,575.0 935.9,575.3 936.0,572.1 936.2,574.8 936.3,574.6 936.4,574.4 936.6,570.8 936.7,572.4 936.8,573.3 937.0,576.5 937.1,578.9 937.2,571.8 937.4,571.7 937.5,575.1 937.6,573.0 937.8,572.1 937.9,571.6 938.0,570.9 938.2,575.3 938.3,569.4 938.4,578.4 938.6,571.9 938.7,573.3 938.8,572.1 939.0,568.8 939.1,570.0 939.2,578.2 939.3,579.5 939.5,571.5 939.6,577.2 939.7,573.8 939.9,571.3 940.0,578.8 940.1,580.4 940.3,573.2 940.4,573.8 940.5,574.9 940.7,573.9 940.8,576.6 940.9,578.5 941.1,574.5 941.2,577.7 941.3,580.0 941.5,573.3 941.6,575.0 941.7,573.2 941.9,577.5 942.0,576.5 942.1,577.5 942.3,577.3 942.4,574.0 942.5,576.9 942.7,573.7 942.8,573.8 942.9,568.4 943.1,579.0 943.2,571.8 943.3,575.0 943.5,574.8 943.6,579.0 943.7,575.7 943.9,571.8 944.0,574.5 944.1,574.1 944.3,575.0 944.4,570.4 944.5,573.5 944.7,580.1 944.8,574.9 944.9,578.8 945.0,583.0 945.2,574.2 945.3,568.2 945.4,572.1 945.6,575.9 945.7,575.3 945.8,569.0 946.0,571.8 946.1,572.3 946.2,572.6 946.4,572.7 946.5,570.4 946.6,571.3 946.8,572.5 946.9,576.4 947.0,571.5 947.2,574.8 947.3,569.0 947.4,576.3 947.6,573.2 947.7,573.3 947.8,577.4 948.0,568.2 948.1,569.0 948.2,575.0 948.4,571.0 948.5,572.5 948.6,581.8 948.8,572.7 948.9,573.8 949.0,573.2 949.2,576.8 949.3,574.1 949.4,573.7 949.6,569.2 949.7,571.9 949.8,572.7 950.0,567.9 950.1,574.1 950.2,573.8 950.4,578.3 950.5,568.3 950.6,570.2 950.8,570.2 950.9,570.8 951.0,572.0 951.1,571.7 951.3,572.9 951.4,573.0 951.5,572.2 951.7,567.8 951.8,571.1 951.9,573.0 952.1,575.0 952.2,574.9 952.3,567.7 952.5,571.2 952.6,573.0 952.7,574.6 952.9,577.2 953.0,574.0 953.1,570.9 953.3,574.9 953.4,574.3 953.5,574.3 953.7,573.3 953.8,578.7 953.9,574.6 954.1,576.4 954.2,571.0 954.3,576.2 954.5,572.1 954.6,569.2 954.7,574.8 954.9,575.8 955.0,573.4 955.1,573.7 955.3,576.5 955.4,571.8 955.5,567.0 955.7,574.1 955.8,574.1 955.9,576.6 956.1,572.3 956.2,576.8 956.3,576.2 956.5,569.0 956.6,575.9 956.7,569.7 956.9,568.3 957.0,572.3 957.1,571.5 957.2,567.2 957.4,573.8 957.5,574.7 957.6,576.9 957.8,572.3 957.9,567.7 958.0,569.2 958.2,574.8 958.3,574.2 958.4,573.2 958.6,571.1 958.7,572.6 958.8,571.3 959.0,571.0 959.1,572.6 959.2,572.1 959.4,571.4 959.5,572.8 959.6,571.0 959.8,566.6 959.9,570.8 960.0,572.4 960.2,577.6 960.3,571.1 960.4,577.8 960.6,575.8 960.7,569.1 960.8,569.7 961.0,572.4 961.1,577.2 961.2,573.1 961.4,574.3 961.5,570.6 961.6,565.9 961.8,572.3 961.9,575.5 962.0,577.0 962.2,573.7 962.3,574.0 962.4,577.0 962.6,572.6 962.7,576.7 962.8,569.5 963.0,569.7 963.1,569.7 963.2,574.3 963.3,571.2 963.5,573.4 963.6,574.2 963.7,574.3 963.9,577.5 964.0,577.8 964.1,570.8 964.3,573.9 964.4,572.7 964.5,570.4 964.7,578.7 964.8,575.4 964.9,572.2 965.1,571.3 965.2,573.5 965.3,568.9 965.5,571.0 965.6,575.6 965.7,575.0 965.9,569.5 966.0,570.2 966.1,577.6 966.3,567.4 966.4,569.9 966.5,567.1 966.7,572.6 966.8,572.6 966.9,575.1 967.1,563.7 967.2,572.0 967.3,566.6 967.5,574.1 967.6,571.6 967.7,577.4 967.9,573.5 968.0,569.7 968.1,576.7 968.3,569.4 968.4,572.0 968.5,576.3 968.7,574.7 968.8,574.4 968.9,573.0 969.1,574.3 969.2,575.2 969.3,573.5 969.4,575.7 969.6,576.3 969.7,572.4 969.8,570.1 970.0,577.4 970.1,572.4 970.2,574.6 970.4,575.5 970.5,570.4 970.6,574.7 970.8,568.1 970.9,575.3 971.0,571.6 971.2,573.3 971.3,574.7 971.4,570.5 971.6,572.9 971.7,570.4 971.8,572.6 972.0,575.9 972.1,573.1 972.2,572.6 972.4,569.7 972.5,575.9 972.6,573.3 972.8,578.6 972.9,571.2 973.0,576.5 973.2,578.6 973.3,573.4 973.4,569.5 973.6,577.7 973.7,576.2 973.8,575.0 974.0,576.0 974.1,571.2 974.2,574.9 974.4,574.7 974.5,570.9 974.6,574.7 974.8,570.8 974.9,575.4 975.0,575.7 975.2,577.7 975.3,565.9 975.4,572.7 975.5,571.0 975.7,571.5 975.8,570.6 975.9,571.2 976.1,565.0 976.2,574.4 976.3,576.0 976.5,574.7 976.6,575.7 976.7,569.2 976.9,568.7 977.0,574.3 977.1,575.3 977.3,572.0 977.4,566.5 977.5,579.6 977.7,569.1 977.8,573.9 977.9,567.5 978.1,574.6 978.2,572.0 978.3,576.1 978.5,574.6 978.6,567.2 978.7,569.2 978.9,573.3 979.0,575.4 979.1,578.3 979.3,573.7 979.4,572.7 979.5,572.7 979.7,572.6 979.8,575.5 979.9,572.4 980.1,572.5 980.2,568.3 980.3,566.8 980.5,573.5 980.6,575.3 980.7,573.1 980.9,574.6 981.0,575.1 981.1,573.0 981.2,576.1 981.4,570.6 981.5,573.1 981.6,572.0 981.8,573.2 981.9,575.2 982.0,575.7 982.2,573.3 982.3,574.1 982.4,571.9 982.6,572.6 982.7,576.9 982.8,572.5 983.0,576.9 983.1,574.3 983.2,573.4 983.4,579.3 983.5,572.6 983.6,572.2 983.8,572.6 983.9,573.5 984.0,573.7 984.2,575.5 984.3,573.3 984.4,574.5 984.6,572.1 984.7,576.2 984.8,571.4 985.0,571.6 985.1,572.2 985.2,572.9 985.4,569.6 985.5,576.7 985.6,570.3 985.8,570.8 985.9,570.2 986.0,569.7 986.2,573.0 986.3,571.8 986.4,569.3 986.6,569.5 986.7,569.8 986.8,575.2 987.0,568.8 987.1,567.0 987.2,567.5 987.3,569.6 987.5,575.6 987.6,567.5 987.7,570.3 987.9,578.3 988.0,569.3 988.1,575.1 988.3,574.4 988.4,572.5 988.5,566.9 988.7,572.1 988.8,570.2 988.9,565.5 989.1,566.1 989.2,571.7 989.3,572.1 989.5,574.8 989.6,572.9 989.7,569.2 989.9,569.7 990.0,570.8 990.1,568.3 990.3,573.9 990.4,572.1 990.5,569.8 990.7,570.4 990.8,568.9 990.9,571.3 991.1,574.1 991.2,571.8 991.3,576.0 991.5,578.0 991.6,571.1 991.7,573.2 991.9,571.7 992.0,578.3 992.1,573.5 992.3,573.9 992.4,574.9 992.5,579.4 992.7,573.5 992.8,570.4 992.9,572.3 993.1,575.4 993.2,573.4 993.3,571.0 993.4,581.6 993.6,573.4 993.7,571.1 993.8,570.7 994.0,567.6 994.1,569.1 994.2,571.6 994.4,571.1 994.5,569.8 994.6,573.6 994.8,572.4 994.9,569.5 995.0,566.4 995.2,573.3 995.3,572.7 995.4,572.2 995.6,569.0 995.7,573.1 995.8,568.3 996.0,576.0 996.1,573.2 996.2,573.0 996.4,570.3 996.5,569.3 996.6,577.1 996.8,575.4 996.9,571.5 997.0,575.0 997.2,577.8 997.3,569.6 997.4,571.4 997.6,571.4 997.7,574.9 997.8,569.8 998.0,574.2 998.1,569.9 998.2,576.0 998.4,575.6 998.5,572.1 998.6,575.0 998.8,571.1 998.9,572.4 999.0,576.3 999.2,573.1 999.3,574.4 999.4,570.4 999.5,575.3 999.7,574.4 999.8,569.7 999.9,566.9 1000.1,567.7 1000.2,573.7 1000.3,573.0 1000.5,568.8 1000.6,574.2 1000.7,577.0 1000.9,573.4 1001.0,572.3 1001.1,576.7 1001.3,579.1 1001.4,578.3 1001.5,572.2 1001.7,576.7 1001.8,574.5 1001.9,573.4 1002.1,571.7 1002.2,574.2 1002.3,571.3 1002.5,575.7 1002.6,573.8 1002.7,575.9 1002.9,569.3 1003.0,573.0 1003.1,574.9 1003.3,573.3 1003.4,572.9 1003.5,569.6 1003.7,576.8 1003.8,575.2 1003.9,572.8 1004.1,563.4 1004.2,568.1 1004.3,571.7 1004.5,568.8 1004.6,564.6 1004.7,571.4 1004.9,571.9 1005.0,566.9 1005.1,569.5 1005.3,569.1 1005.4,573.1 1005.5,565.6 1005.6,566.6 1005.8,570.1 1005.9,569.9 1006.0,578.3 1006.2,569.7 1006.3,572.4 1006.4,570.6 1006.6,569.6 1006.7,572.9 1006.8,577.5 1007.0,570.8 1007.1,573.8 1007.2,572.8 1007.4,574.2 1007.5,573.8 1007.6,580.0 1007.8,569.2 1007.9,572.2 1008.0,569.8 1008.2,567.0 1008.3,573.1 1008.4,578.9 1008.6,575.8 1008.7,576.8 1008.8,574.3 1009.0,572.3 1009.1,578.8 1009.2,571.8 1009.4,577.8 1009.5,572.6 1009.6,573.9 1009.8,574.6 1009.9,573.9 1010.0,575.3 1010.2,575.6 1010.3,579.3 1010.4,574.6 1010.6,568.5 1010.7,567.7 1010.8,569.3 1011.0,571.2 1011.1,575.3 1011.2,568.8 1011.4,573.4 1011.5,573.7 1011.6,574.6 1011.7,573.1 1011.9,574.5 1012.0,573.3 1012.1,576.7 1012.3,574.7 1012.4,566.4 1012.5,573.6 1012.7,573.9 1012.8,571.2 1012.9,570.6 1013.1,576.2 1013.2,573.4 1013.3,569.8 1013.5,571.8 1013.6,571.8 1013.7,567.1 1013.9,574.0 1014.0,571.3 1014.1,573.2 1014.3,566.9 1014.4,577.7 1014.5,573.9 1014.7,573.6 1014.8,569.9 1014.9,569.7 1015.1,567.7 1015.2,577.0 1015.3,570.0 1015.5,573.5 1015.6,574.6 1015.7,570.8 1015.9,575.1 1016.0,578.6 1016.1,573.3 1016.3,576.6 1016.4,574.0 1016.5,570.8 1016.7,571.0 1016.8,567.0 1016.9,572.8 1017.1,577.0 1017.2,574.6 1017.3,575.3 1017.4,576.5 1017.6,571.4 1017.7,574.7 1017.8,579.0 1018.0,570.7 1018.1,572.5 1018.2,571.7 1018.4,572.3 1018.5,570.7 1018.6,572.7 1018.8,568.3 1018.9,571.3 1019.0,571.2 1019.2,571.0 1019.3,576.9 1019.4,573.0 1019.6,573.4 1019.7,572.0 1019.8,576.8 1020.0,567.7 1020.1,572.5 1020.2,576.4 1020.4,578.1 1020.5,573.7 1020.6,573.2 1020.8,575.3 1020.9,572.4 1021.0,574.8 1021.2,571.0 1021.3,574.9 1021.4,573.2 1021.6,569.7 1021.7,564.6 1021.8,576.0 1022.0,573.8 1022.1,575.6 1022.2,569.9 1022.4,576.2 1022.5,574.2 1022.6,573.0 1022.8,576.0 1022.9,576.2 1023.0,574.5 1023.2,579.5 1023.3,576.9 1023.4,573.5 1023.5,571.8 1023.7,572.7 1023.8,577.6 1023.9,573.5 1024.1,569.1 1024.2,569.9 1024.3,572.1 1024.5,574.5 1024.6,569.5 1024.7,573.1 1024.9,574.8 1025.0,573.5 1025.1,566.4 1025.3,570.5 1025.4,567.5 1025.5,573.1 1025.7,568.5 1025.8,573.7 1025.9,572.3 1026.1,564.1 1026.2,569.1 1026.3,573.2 1026.5,572.1 1026.6,571.4 1026.7,568.9 1026.9,574.5 1027.0,578.3 1027.1,573.7 1027.3,572.8 1027.4,572.4 1027.5,568.7 1027.7,571.6 1027.8,569.9 1027.9,576.2 1028.1,569.9 1028.2,565.8 1028.3,570.4 1028.5,571.8 1028.6,572.0 1028.7,566.6 1028.9,574.7 1029.0,572.5 1029.1,570.7 1029.3,569.4 1029.4,572.9 1029.5,571.0 1029.6,572.7 1029.8,571.5 1029.9,572.4 1030.0,575.9 1030.2,572.4 1030.3,569.6 1030.4,575.4 1030.6,573.2 1030.7,570.7 1030.8,576.1 1031.0,572.6 1031.1,576.6 1031.2,569.8 1031.4,566.5 1031.5,567.7 1031.6,574.5 1031.8,571.7 1031.9,574.0 1032.0,574.3 1032.2,569.5 1032.3,578.4 1032.4,571.1 1032.6,574.8 1032.7,570.2 1032.8,573.7 1033.0,576.6 1033.1,573.4 1033.2,571.8 1033.4,573.8 1033.5,572.3 1033.6,575.5 1033.8,580.4 1033.9,570.8 1034.0,571.5 1034.2,573.1 1034.3,573.0 1034.4,569.8 1034.6,574.5 1034.7,575.4 1034.8,573.5 1035.0,569.5 1035.1,577.5 1035.2,569.2 1035.4,575.0 1035.5,576.8 1035.6,569.0 1035.7,573.4 1035.9,577.1 1036.0,573.8 1036.1,569.9 1036.3,568.9 1036.4,574.0 1036.5,571.0 1036.7,570.0 1036.8,574.1 1036.9,571.0 1037.1,572.3 1037.2,573.9 1037.3,573.7 1037.5,572.2 1037.6,572.3 1037.7,574.4 1037.9,573.8 1038.0,568.8 1038.1,571.8 1038.3,569.6 1038.4,568.3 1038.5,570.3 1038.7,565.2 1038.8,574.6 1038.9,569.8 1039.1,572.8 1039.2,566.2 1039.3,567.0 1039.5,578.4 1039.6,575.4 1039.7,570.4 1039.9,570.0 1040.0,570.4 1040.1,572.9 1040.3,571.1 1040.4,570.8 1040.5,573.3 1040.7,569.6 1040.8,579.9 1040.9,570.5 1041.1,575.5 1041.2,569.2 1041.3,572.8 1041.5,574.7 1041.6,570.4 1041.7,574.6 1041.8,574.6 1042.0,576.3 1042.1,571.5 1042.2,569.6 1042.4,568.2 1042.5,572.0 1042.6,568.2 1042.8,571.6 1042.9,571.9 1043.0,570.0 1043.2,568.9 1043.3,572.8 1043.4,572.3 1043.6,572.1 1043.7,570.9 1043.8,573.7 1044.0,567.5 1044.1,571.8 1044.2,569.3 1044.4,573.5 1044.5,570.3 1044.6,570.3 1044.8,572.9 1044.9,565.2 1045.0,570.6 1045.2,566.0 1045.3,568.6 1045.4,573.7 1045.6,573.4 1045.7,570.7 1045.8,571.8 1046.0,571.8 1046.1,572.7 1046.2,577.6 1046.4,572.4 1046.5,578.4 1046.6,570.3 1046.8,573.7 1046.9,573.5 1047.0,572.3 1047.2,571.0 1047.3,577.1 1047.4,578.0 1047.5,575.8 1047.7,578.8 1047.8,575.0 1047.9,567.0 1048.1,575.3 1048.2,570.4 1048.3,576.6 1048.5,571.3 1048.6,573.2 1048.7,572.6 1048.9,570.4 1049.0,566.9 1049.1,571.6 1049.3,571.8 1049.4,575.2 1049.5,570.2 1049.7,573.0 1049.8,569.9 1049.9,572.5 1050.1,567.1 1050.2,578.5 1050.3,573.3 1050.5,569.5 1050.6,572.9 1050.7,574.6 1050.9,573.3 1051.0,576.9 1051.1,572.2 1051.3,564.9 1051.4,568.9 1051.5,575.8 1051.7,574.7 1051.8,573.6 1051.9,569.2 1052.1,574.9 1052.2,574.1 1052.3,569.0 1052.5,569.1 1052.6,573.1 1052.7,575.4 1052.9,577.0 1053.0,574.4 1053.1,578.9 1053.3,569.8 1053.4,573.9 1053.5,570.8 1053.6,566.2 1053.8,568.1 1053.9,575.4 1054.0,569.1 1054.2,568.0 1054.3,573.8 1054.4,574.6 1054.6,572.0 1054.7,576.4 1054.8,567.1 1055.0,579.0 1055.1,575.1 1055.2,572.5 1055.4,572.4 1055.5,571.4 1055.6,571.1 1055.8,572.6 1055.9,568.2 1056.0,578.3 1056.2,571.3 1056.3,573.4 1056.4,571.1 1056.6,570.9 1056.7,574.9 1056.8,573.9 1057.0,569.6 1057.1,570.9 1057.2,574.2 1057.4,565.4 1057.5,564.5 1057.6,576.3 1057.8,570.5 1057.9,563.6 1058.0,569.2 1058.2,570.8 1058.3,572.1 1058.4,573.1 1058.6,572.0 1058.7,573.2 1058.8,569.3 1059.0,572.7 1059.1,572.8 1059.2,575.4 1059.4,571.6 1059.5,573.9 1059.6,571.8 1059.7,567.6 1059.9,569.6 1060.0,569.0 1060.1,569.5 1060.3,570.4 1060.4,571.0 1060.5,571.6 1060.7,568.4 1060.8,573.9 1060.9,566.3 1061.1,570.4 1061.2,572.9 1061.3,571.7 1061.5,572.3 1061.6,570.1 1061.7,573.0 1061.9,567.2 1062.0,573.3 1062.1,577.7 1062.3,573.0 1062.4,577.4 1062.5,571.3 1062.7,568.0 1062.8,569.7 1062.9,575.9 1063.1,574.1 1063.2,566.4 1063.3,571.2 1063.5,572.5 1063.6,569.2 1063.7,564.9 1063.9,568.4 1064.0,572.1 1064.1,571.8 1064.3,571.2 1064.4,575.3 1064.5,576.8 1064.7,573.9 1064.8,577.1 1064.9,574.2 1065.1,573.6 1065.2,566.5 1065.3,576.4 1065.5,574.4 1065.6,574.7 1065.7,572.3 1065.8,570.2 1066.0,575.2 1066.1,576.1 1066.2,578.5 1066.4,576.2 1066.5,571.5 1066.6,572.9 1066.8,575.9 1066.9,574.0 1067.0,573.1 1067.2,572.0 1067.3,575.5 1067.4,574.2 1067.6,579.0 1067.7,576.8 1067.8,567.9 1068.0,579.6 1068.1,574.0 1068.2,572.1 1068.4,573.7 1068.5,575.1 1068.6,572.9 1068.8,572.6 1068.9,572.6 1069.0,578.4 1069.2,572.9 1069.3,575.3 1069.4,574.4 1069.6,572.0 1069.7,570.8 1069.8,570.1 1070.0,574.2 1070.1,570.0 1070.2,569.3 1070.4,569.5 1070.5,568.5 1070.6,573.6 1070.8,573.4 1070.9,570.1 1071.0,576.8 1071.2,572.3 1071.3,574.6 1071.4,574.1 1071.6,578.3 1071.7,575.8 1071.8,573.1 1071.9,570.0 1072.1,570.0 1072.2,573.5 1072.3,574.1 1072.5,576.3 1072.6,572.2 1072.7,574.5 1072.9,571.8 1073.0,568.1 1073.1,573.9 1073.3,578.8 1073.4,576.7 1073.5,578.5 1073.7,577.5 1073.8,569.5 1073.9,572.4 1074.1,578.4 1074.2,571.8 1074.3,570.0 1074.5,574.9 1074.6,575.9 1074.7,574.8 1074.9,572.9 1075.0,571.9 1075.1,570.3 1075.3,570.2 1075.4,569.9 1075.5,569.3 1075.7,571.1 1075.8,578.0 1075.9,573.6 1076.1,572.1 1076.2,574.4 1076.3,570.8 1076.5,574.7 1076.6,576.3 1076.7,569.0 1076.9,571.5 1077.0,572.8 1077.1,570.6 1077.3,570.8 1077.4,572.4 1077.5,581.2 1077.7,575.6 1077.8,574.7 1077.9,576.4 1078.0,572.7 1078.2,569.4 1078.3,574.7 1078.4,576.8 1078.6,566.8 1078.7,574.7 1078.8,577.1 1079.0,572.6 1079.1,571.7 1079.2,575.4 1079.4,570.7 1079.5,574.4 1079.6,575.6 1079.8,572.2 1079.9,570.3 1080.0,574.6 1080.2,571.3 1080.3,572.5 1080.4,563.3 1080.6,574.0 1080.7,567.7 1080.8,572.4 1081.0,572.6 1081.1,570.1 1081.2,569.6 1081.4,568.4 1081.5,571.8 1081.6,574.3 1081.8,573.7 1081.9,570.6 1082.0,570.2 1082.2,567.6 1082.3,570.6 1082.4,568.9 1082.6,567.3 1082.7,571.6 1082.8,576.8 1083.0,576.0 1083.1,576.5 1083.2,567.3 1083.4,574.8 1083.5,568.4 1083.6,570.4 1083.7,567.0 1083.9,569.2 1084.0,572.8 1084.1,572.8 1084.3,572.0 1084.4,571.7 1084.5,573.8 1084.7,572.1 1084.8,567.2 1084.9,577.7 1085.1,572.2 1085.2,575.6 1085.3,572.6 1085.5,570.7 1085.6,574.0 1085.7,571.2 1085.9,578.8 1086.0,570.3 1086.1,575.8 1086.3,572.1 1086.4,573.6 1086.5,582.0 1086.7,576.4 1086.8,573.3 1086.9,569.3 1087.1,573.3 1087.2,573.6 1087.3,578.6 1087.5,569.5 1087.6,568.3 1087.7,573.8 1087.9,574.7 1088.0,579.4 1088.1,571.0 1088.3,565.6 1088.4,571.7 1088.5,570.2 1088.7,572.2 1088.8,576.4 1088.9,569.3 1089.1,577.5 1089.2,574.0 1089.3,572.7 1089.5,570.8 1089.6,571.9 1089.7,571.7 1089.8,575.5 1090.0,577.4 1090.1,573.2 1090.2,575.3 1090.4,577.2 1090.5,577.4 1090.6,574.8 1090.8,579.4 1090.9,577.7 1091.0,578.6 1091.2,572.9 1091.3,572.2 1091.4,567.2 1091.6,577.7 1091.7,575.4 1091.8,570.5 1092.0,573.7 1092.1,574.4 1092.2,567.9 1092.4,574.4 1092.5,577.1 1092.6,577.4 1092.8,572.2 1092.9,572.4 1093.0,578.0 1093.2,576.6 1093.3,571.7 1093.4,571.8 1093.6,575.9 1093.7,571.7 1093.8,571.4 1094.0,579.0 1094.1,574.3 1094.2,572.2 1094.4,575.1 1094.5,579.8 1094.6,573.6 1094.8,570.4 1094.9,568.1 1095.0,579.6 1095.2,564.3 1095.3,576.2 1095.4,569.6 1095.6,568.8 1095.7,569.9 1095.8,572.4 1095.9,576.3 1096.1,570.6 1096.2,534.9 1096.3,540.1 1096.5,563.8 1096.6,570.2 1096.7,566.6 1096.9,575.2 1097.0,568.1 1097.1,568.1 1097.3,568.4 1097.4,573.7 1097.5,577.4 1097.7,574.4 1097.8,580.6 1097.9,579.3 1098.1,574.0 1098.2,577.3 1098.3,574.8 1098.5,574.6 1098.6,568.3 1098.7,570.4 1098.9,574.4 1099.0,570.2 1099.1,576.5 1099.3,575.1 1099.4,571.0 1099.5,577.6 1099.7,574.8 1099.8,578.4 1099.9,574.0 1100.1,569.4 1100.2,577.1 1100.3,573.9 1100.5,576.9 1100.6,577.7 1100.7,577.7 1100.9,569.6 1101.0,566.6 1101.1,572.9 1101.3,576.7 1101.4,571.9 1101.5,575.2 1101.7,571.5 1101.8,573.2 1101.9,573.5 1102.0,572.3 1102.2,576.0 1102.3,575.6 1102.4,579.6 1102.6,575.6 1102.7,578.7 1102.8,574.9 1103.0,577.6 1103.1,574.2 1103.2,572.9 1103.4,578.6 1103.5,576.2 1103.6,576.8 1103.8,571.8 1103.9,568.7 1104.0,571.3 1104.2,575.0 1104.3,569.5 1104.4,578.4 1104.6,568.9 1104.7,576.1 1104.8,583.1 1105.0,566.3 1105.1,569.6 1105.2,577.6 1105.4,573.9 1105.5,575.3 1105.6,574.0 1105.8,579.0 1105.9,576.7 1106.0,573.5 1106.2,574.1 1106.3,570.8 1106.4,574.2 1106.6,567.6 1106.7,577.3 1106.8,574.2 1107.0,580.8 1107.1,578.3 1107.2,570.2 1107.4,577.4 1107.5,572.9 1107.6,574.9 1107.8,577.8 1107.9,575.6 1108.0,575.8 1108.1,575.3 1108.3,571.4 1108.4,571.8 1108.5,575.5 1108.7,576.4 1108.8,572.5 1108.9,573.7 1109.1,570.2 1109.2,565.2 1109.3,570.8 1109.5,573.6 1109.6,573.9 1109.7,576.2 1109.9,576.2 1110.0,576.0 1110.1,574.4 1110.3,574.7 1110.4,571.3 1110.5,574.6 1110.7,574.0 1110.8,576.8 1110.9,567.8 1111.1,571.7 1111.2,567.2 1111.3,570.4 1111.5,568.4 1111.6,574.0 1111.7,570.8 1111.9,564.6 1112.0,576.8 1112.1,569.4 1112.3,568.1 1112.4,572.0 1112.5,570.9 1112.7,569.3 1112.8,575.5 1112.9,572.3 1113.1,576.2 1113.2,575.5 1113.3,576.0 1113.5,574.4 1113.6,573.3 1113.7,572.5 1113.8,578.8 1114.0,568.1 1114.1,570.6 1114.2,572.5 1114.4,575.9 1114.5,575.9 1114.6,573.9 1114.8,574.1 1114.9,580.8 1115.0,573.1 1115.2,566.4 1115.3,581.4 1115.4,572.2 1115.6,573.8 1115.7,575.6 1115.8,571.0 1116.0,579.0 1116.1,574.5 1116.2,570.2 1116.4,575.4 1116.5,576.3 1116.6,574.2 1116.8,576.0 1116.9,569.6 1117.0,577.4 1117.2,571.5 1117.3,578.3 1117.4,572.1 1117.6,574.0 1117.7,581.7 1117.8,573.1 1118.0,576.3 1118.1,574.9 1118.2,568.3 1118.4,576.9 1118.5,576.6 1118.6,568.9 1118.8,573.6 1118.9,569.3 1119.0,572.9 1119.2,576.3 1119.3,574.0 1119.4,569.9 1119.6,570.6 1119.7,573.8 1119.8,573.1 1119.9,573.8 1120.1,575.4 1120.2,567.3 1120.3,573.0 1120.5,577.0 1120.6,574.6 1120.7,570.9 1120.9,571.1 1121.0,573.8 1121.1,575.9 1121.3,573.7 1121.4,578.5 1121.5,577.1 1121.7,570.1 1121.8,574.1 1121.9,571.3 1122.1,568.5 1122.2,570.3 1122.3,572.5 1122.5,566.1 1122.6,571.1 1122.7,574.2 1122.9,570.9 1123.0,571.4 1123.1,575.7 1123.3,572.8 1123.4,573.3 1123.5,579.5 1123.7,574.1 1123.8,574.5 1123.9,575.0 1124.1,578.8 1124.2,575.1 1124.3,574.0 1124.5,573.2 1124.6,577.1 1124.7,571.5 1124.9,578.0 1125.0,575.2 1125.1,570.4 1125.3,576.6 1125.4,576.1 1125.5,571.1 1125.7,575.5 1125.8,575.3 1125.9,573.1 1126.0,570.4 1126.2,580.7 1126.3,576.4 1126.4,577.0 1126.6,577.0 1126.7,576.5 1126.8,576.4 1127.0,572.5 1127.1,575.8 1127.2,572.6 1127.4,571.4 1127.5,574.8 1127.6,572.0 1127.8,567.2 1127.9,571.4 1128.0,574.6 1128.2,572.8 1128.3,575.2 1128.4,571.6 1128.6,569.8 1128.7,575.3 1128.8,573.0 1129.0,569.1 1129.1,574.0 1129.2,572.2 1129.4,576.2 1129.5,575.5 1129.6,575.0 1129.8,566.6 1129.9,574.9 1130.0,575.5 1130.2,575.5 1130.3,574.3 1130.4,572.2 1130.6,573.8 1130.7,568.4 1130.8,574.4 1131.0,570.6 1131.1,574.5 1131.2,573.1 1131.4,579.8 1131.5,575.4 1131.6,575.2 1131.8,575.9 1131.9,582.2 1132.0,572.4 1132.1,576.7 1132.3,576.6 1132.4,576.0 1132.5,575.7 1132.7,573.8 1132.8,579.7 1132.9,578.5 1133.1,574.8 1133.2,575.2 1133.3,576.4 1133.5,577.3 1133.6,577.9 1133.7,575.1 1133.9,571.2 1134.0,578.2 1134.1,570.1 1134.3,572.3 1134.4,576.3 1134.5,573.0 1134.7,579.7 1134.8,580.6 1134.9,579.4 1135.1,576.4 1135.2,575.6 1135.3,576.3 1135.5,574.7 1135.6,581.9 1135.7,573.9 1135.9,579.6 1136.0,538.0 1136.1,547.9 1136.3,578.4 1136.4,578.8 1136.5,577.8 1136.7,574.9 1136.8,572.9 1136.9,573.1 1137.1,578.3 1137.2,578.1 1137.3,578.2 1137.5,574.0 1137.6,581.6 1137.7,571.2 1137.9,576.2 1138.0,577.0 1138.1,573.7 1138.2,571.6 1138.4,573.9 1138.5,571.6 1138.6,574.4 1138.8,570.3 1138.9,570.2 1139.0,574.8 1139.2,569.9 1139.3,573.8 1139.4,574.0 1139.6,577.0 1139.7,575.0 1139.8,571.6 1140.0,578.2 1140.1,571.8 1140.2,572.9 1140.4,573.2 1140.5,580.3 1140.6,573.7 1140.8,571.3 1140.9,576.1 1141.0,573.5 1141.2,581.3 1141.3,572.0 1141.4,576.3 1141.6,571.6 1141.7,580.0 1141.8,572.4 1142.0,575.2 1142.1,572.0 1142.2,577.5 1142.4,576.2 1142.5,567.4 1142.6,577.1 1142.8,576.8 1142.9,575.1 1143.0,577.5 1143.2,570.5 1143.3,568.7 1143.4,576.4 1143.6,579.8 1143.7,570.7 1143.8,571.0 1144.0,571.7 1144.1,570.4 1144.2,576.3 1144.3,574.1 1144.5,578.1 1144.6,578.2 1144.7,570.4 1144.9,575.6 1145.0,566.0 1145.1,573.1 1145.3,575.8 1145.4,571.6 1145.5,568.7 1145.7,573.0 1145.8,578.3 1145.9,573.3 1146.1,570.1 1146.2,576.1 1146.3,576.8 1146.5,571.4 1146.6,573.9 1146.7,577.7 1146.9,575.1 1147.0,576.2 1147.1,573.4 1147.3,574.5 1147.4,571.4 1147.5,572.8 1147.7,580.0 1147.8,573.8 1147.9,572.1 1148.1,573.3 1148.2,571.3 1148.3,576.1 1148.5,577.3 1148.6,571.2 1148.7,577.2 1148.9,580.4 1149.0,570.3 1149.1,575.7 1149.3,574.4 1149.4,578.0 1149.5,577.9 1149.7,577.3 1149.8,574.7 1149.9,602.0 1150.0,597.3 1150.2,571.5 1150.3,577.7 1150.4,577.1 1150.6,571.2 1150.7,573.8 1150.8,578.2 1151.0,567.7 1151.1,576.2 1151.2,572.7 1151.4,573.0 1151.5,569.3 1151.6,575.6 1151.8,571.0 1151.9,576.5 1152.0,570.4 1152.2,576.2 1152.3,574.9 1152.4,568.3 1152.6,573.3 1152.7,574.0 1152.8,567.2 1153.0,573.5 1153.1,577.0 1153.2,572.5 1153.4,578.5 1153.5,571.0 1153.6,570.8 1153.8,576.7 1153.9,577.1 1154.0,574.6 1154.2,575.4 1154.3,578.2 1154.4,573.5 1154.6,581.6 1154.7,576.8 1154.8,576.5 1155.0,575.6 1155.1,574.0 1155.2,578.6 1155.4,573.5 1155.5,575.9 1155.6,577.2 1155.8,579.5 1155.9,578.7 1156.0,573.9 1156.1,578.3 1156.3,575.3 1156.4,572.0 1156.5,571.9 1156.7,570.2 1156.8,576.3 1156.9,578.4 1157.1,571.9 1157.2,574.2 1157.3,571.1 1157.5,574.6 1157.6,571.0 1157.7,571.9 1157.9,572.6 1158.0,573.1 1158.1,573.5 1158.3,574.2 1158.4,574.1 1158.5,571.8 1158.7,576.3 1158.8,569.3 1158.9,575.0 1159.1,571.2 1159.2,574.8 1159.3,575.4 1159.5,568.1 1159.6,575.0 1159.7,578.5 1159.9,577.1 1160.0,576.1 1160.1,568.1 1160.3,574.5 1160.4,572.0 1160.5,578.0 1160.7,574.0 1160.8,572.9 1160.9,569.4 1161.1,577.4 1161.2,572.9 1161.3,573.7 1161.5,578.0 1161.6,575.2 1161.7,576.1 1161.9,582.4 1162.0,573.5 1162.1,573.5 1162.2,576.7 1162.4,579.6 1162.5,570.7 1162.6,574.0 1162.8,571.9 1162.9,570.9 1163.0,576.3 1163.2,572.1 1163.3,575.2 1163.4,574.7 1163.6,574.6 1163.7,574.4 1163.8,571.2 1164.0,574.4 1164.1,575.1 1164.2,575.2 1164.4,573.2 1164.5,577.1 1164.6,576.3 1164.8,574.8 1164.9,576.3 1165.0,574.8 1165.2,576.3 1165.3,567.8 1165.4,570.2 1165.6,572.8 1165.7,574.5 1165.8,567.8 1166.0,573.8 1166.1,575.1 1166.2,573.9 1166.4,574.2 1166.5,570.6 1166.6,574.9 1166.8,568.5 1166.9,577.8 1167.0,573.0 1167.2,578.1 1167.3,569.5 1167.4,576.5 1167.6,575.9 1167.7,572.8 1167.8,572.2 1168.0,579.7 1168.1,577.4 1168.2,580.4 1168.3,575.6 1168.5,576.4 1168.6,577.1 1168.7,577.9 1168.9,577.2 1169.0,578.4 1169.1,574.4 1169.3,571.4 1169.4,581.9 1169.5,576.2 1169.7,577.2 1169.8,574.3 1169.9,578.8 1170.1,576.2 1170.2,579.0 1170.3,573.3 1170.5,575.2 1170.6,576.1 1170.7,574.3 1170.9,576.1 1171.0,580.2 1171.1,573.3 1171.3,573.7 1171.4,575.1 1171.5,571.7 1171.7,571.0 1171.8,578.5 1171.9,577.8 1172.1,570.3 1172.2,570.5 1172.3,577.0 1172.5,578.1 1172.6,576.3 1172.7,575.8 1172.9,579.2 1173.0,574.3 1173.1,578.3 1173.3,578.1 1173.4,571.4 1173.5,576.3 1173.7,574.8 1173.8,572.4 1173.9,571.2 1174.1,574.7 1174.2,573.6 1174.3,576.4 1174.4,568.3 1174.6,572.3 1174.7,577.5 1174.8,574.1 1175.0,571.8 1175.1,572.1 1175.2,568.2 1175.4,569.9 1175.5,576.2 1175.6,575.1 1175.8,579.0 1175.9,574.3 1176.0,574.6 1176.2,566.9 1176.3,574.8 1176.4,581.3 1176.6,576.9 1176.7,574.4 1176.8,578.8 1177.0,577.5 1177.1,576.0 1177.2,574.1 1177.4,575.8 1177.5,577.6 1177.6,572.1 1177.8,576.2 1177.9,575.7 1178.0,578.8 1178.2,577.0 1178.3,572.8 1178.4,580.2 1178.6,574.9 1178.7,572.6 1178.8,575.6 1179.0,573.2 1179.1,577.2 1179.2,569.6 1179.4,570.4 1179.5,572.7 1179.6,579.2 1179.8,577.3 1179.9,571.0 1180.0,568.7 1180.1,572.9 1180.3,569.5 1180.4,575.6 1180.5,574.3 1180.7,574.0 1180.8,573.0 1180.9,579.4 1181.1,571.6 1181.2,570.6 1181.3,577.9 1181.5,578.4 1181.6,573.2 1181.7,576.0 1181.9,581.5 1182.0,571.3 1182.1,573.5 1182.3,575.7 1182.4,567.4 1182.5,573.5 1182.7,576.1 1182.8,573.8 1182.9,636.5 1183.1,636.5 1183.2,636.5 1183.3,636.5" stroke="#0000ff" stroke-width="1.6" fill="none" stroke-linejoin="round"/>
<polyline points="911.9,808.6 912.0,808.6 912.2,808.6 912.3,808.6 912.4,771.4 912.6,772.9 912.7,764.5 912.8,768.4 913.0,762.2 913.1,780.4 913.2,755.5 913.4,767.3 913.5,761.2 913.6,766.5 913.8,767.9 913.9,761.7 914.0,759.1 914.2,765.4 914.3,765.1 914.4,758.9 914.6,768.7 914.7,773.2 914.8,760.4 914.9,767.1 915.1,774.7 915.2,767.4 915.3,764.7 915.5,768.6 915.6,770.2 915.7,760.0 915.9,754.3 916.0,760.6 916.1,763.4 916.3,756.6 916.4,754.5 916.5,760.2 916.7,754.7 916.8,751.6 916.9,758.5 917.1,761.8 917.2,754.9 917.3,755.1 917.5,750.4 917.6,763.5 917.7,759.7 917.9,760.5 918.0,765.1 918.1,754.6 918.3,752.4 918.4,759.2 918.5,747.7 918.7,750.6 918.8,751.8 918.9,752.9 919.1,750.0 919.2,762.5 919.3,751.8 919.5,751.9 919.6,764.1 919.7,753.1 919.9,756.0 920.0,750.6 920.1,757.0 920.3,754.9 920.4,752.7 920.5,758.9 920.7,751.4 920.8,754.5 920.9,751.3 921.0,756.4 921.2,747.8 921.3,750.0 921.4,753.8 921.6,749.6 921.7,746.5 921.8,743.4 922.0,759.6 922.1,747.7 922.2,749.7 922.4,752.3 922.5,756.1 922.6,745.6 922.8,757.3 922.9,748.6 923.0,744.7 923.2,758.3 923.3,752.3 923.4,756.7 923.6,749.8 923.7,744.0 923.8,741.1 924.0,758.5 924.1,752.9 924.2,747.4 924.4,743.3 924.5,748.6 924.6,753.6 924.8,749.0 924.9,750.6 925.0,751.6 925.2,753.8 925.3,748.9 925.4,749.1 925.6,750.7 925.7,751.2 925.8,765.6 926.0,752.4 926.1,745.4 926.2,751.2 926.4,757.1 926.5,744.8 926.6,748.3 926.8,741.8 926.9,750.3 927.0,752.6 927.1,757.3 927.3,745.2 927.4,740.4 927.5,754.3 927.7,753.7 927.8,748.4 927.9,754.7 928.1,752.3 928.2,752.3 928.3,749.6 928.5,746.1 928.6,750.5 928.7,746.5 928.9,752.3 929.0,749.3 929.1,759.6 929.3,756.9 929.4,747.8 929.5,754.0 929.7,748.6 929.8,748.9 929.9,745.5 930.1,747.4 930.2,746.7 930.3,751.1 930.5,753.2 930.6,753.4 930.7,752.1 930.9,754.8 931.0,752.3 931.1,750.6 931.3,749.4 931.4,751.4 931.5,758.0 931.7,750.7 931.8,749.4 931.9,745.9 932.1,748.0 932.2,752.7 932.3,752.6 932.5,741.7 932.6,746.5 932.7,742.4 932.9,740.9 933.0,752.7 933.1,748.2 933.2,748.1 933.4,747.7 933.5,747.3 933.6,748.4 933.8,748.5 933.9,755.1 934.0,749.9 934.2,752.4 934.3,748.9 934.4,751.2 934.6,746.8 934.7,746.2 934.8,748.1 935.0,748.2 935.1,748.7 935.2,750.3 935.4,749.2 935.5,750.3 935.6,747.0 935.8,748.6 935.9,746.0 936.0,752.9 936.2,744.2 936.3,750.5 936.4,750.2 936.6,748.0 936.7,749.3 936.8,746.4 937.0,750.1 937.1,751.9 937.2,751.1 937.4,743.0 937.5,747.4 937.6,752.1 937.8,747.4 937.9,753.7 938.0,740.9 938.2,753.6 938.3,746.1 938.4,746.0 938.6,753.9 938.7,747.7 938.8,745.4 939.0,747.5 939.1,748.2 939.2,746.2 939.3,748.7 939.5,748.0 939.6,749.8 939.7,747.1 939.9,752.7 940.0,745.8 940.1,750.6 940.3,752.7 940.4,747.3 940.5,742.3 940.7,745.0 940.8,750.6 940.9,746.2 941.1,750.8 941.2,749.4 941.3,748.7 941.5,757.4 941.6,747.9 941.7,752.8 941.9,751.8 942.0,754.2 942.1,754.1 942.3,752.0 942.4,745.3 942.5,741.8 942.7,748.5 942.8,744.7 942.9,749.7 943.1,755.8 943.2,748.3 943.3,747.8 943.5,750.8 943.6,748.3 943.7,747.7 943.9,752.7 944.0,754.9 944.1,750.4 944.3,750.3 944.4,750.6 944.5,745.2 944.7,742.1 944.8,750.1 944.9,746.1 945.0,745.2 945.2,745.9 945.3,745.1 945.4,750.4 945.6,746.1 945.7,741.6 945.8,746.4 946.0,751.9 946.1,747.2 946.2,744.8 946.4,748.0 946.5,751.3 946.6,743.5 946.8,754.1 946.9,747.3 947.0,748.7 947.2,753.3 947.3,744.7 947.4,748.1 947.6,753.7 947.7,747.4 947.8,751.1 948.0,756.7 948.1,752.2 948.2,748.6 948.4,747.2 948.5,749.0 948.6,749.4 948.8,748.0 948.9,750.4 949.0,745.0 949.2,748.5 949.3,748.0 949.4,746.9 949.6,752.7 949.7,751.3 949.8,743.3 950.0,747.4 950.1,749.8 950.2,747.6 950.4,750.8 950.5,748.1 950.6,751.2 950.8,747.6 950.9,754.4 951.0,743.7 951.1,750.7 951.3,754.7 951.4,749.4 951.5,749.5 951.7,747.5 951.8,752.3 951.9,746.1 952.1,734.1 952.2,752.0 952.3,746.2 952.5,748.8 952.6,746.6 952.7,753.9 952.9,751.6 953.0,745.7 953.1,747.5 953.3,741.5 953.4,749.8 953.5,746.7 953.7,736.6 953.8,750.1 953.9,750.4 954.1,747.5 954.2,747.6 954.3,744.4 954.5,747.1 954.6,750.7 954.7,747.5 954.9,738.7 955.0,743.6 955.1,758.1 955.3,749.0 955.4,751.6 955.5,745.9 955.7,748.9 955.8,741.3 955.9,745.2 956.1,745.5 956.2,747.9 956.3,749.3 956.5,747.9 956.6,744.3 956.7,747.4 956.9,750.5 957.0,744.7 957.1,748.4 957.2,749.3 957.4,751.7 957.5,750.7 957.6,750.6 957.8,758.6 957.9,744.5 958.0,746.2 958.2,749.1 958.3,744.6 958.4,746.7 958.6,746.7 958.7,757.4 958.8,749.4 959.0,746.5 959.1,742.5 959.2,741.6 959.4,743.5 959.5,753.3 959.6,756.6 959.8,746.6 959.9,748.6 960.0,745.2 960.2,749.5 960.3,748.0 960.4,754.5 960.6,747.5 960.7,750.5 960.8,747.8 961.0,747.6 961.1,749.4 961.2,747.8 961.4,748.9 961.5,746.3 961.6,747.3 961.8,751.6 961.9,751.8 962.0,743.2 962.2,750.0 962.3,745.8 962.4,747.7 962.6,750.8 962.7,751.0 962.8,747.4 963.0,747.1 963.1,745.9 963.2,752.6 963.3,749.9 963.5,747.8 963.6,742.1 963.7,756.1 963.9,746.0 964.0,749.8 964.1,746.1 964.3,749.7 964.4,746.8 964.5,742.5 964.7,747.2 964.8,747.1 964.9,747.1 965.1,751.1 965.2,746.4 965.3,749.0 965.5,751.0 965.6,748.2 965.7,749.1 965.9,745.9 966.0,749.0 966.1,750.7 966.3,743.3 966.4,744.9 966.5,744.0 966.7,746.3 966.8,749.1 966.9,749.9 967.1,749.8 967.2,744.9 967.3,747.8 967.5,754.0 967.6,748.5 967.7,753.3 967.9,747.3 968.0,751.9 968.1,756.8 968.3,746.6 968.4,747.4 968.5,753.1 968.7,744.4 968.8,739.7 968.9,753.1 969.1,741.2 969.2,750.0 969.3,749.2 969.4,748.2 969.6,752.8 969.7,742.8 969.8,745.9 970.0,750.4 970.1,748.6 970.2,752.9 970.4,748.6 970.5,744.1 970.6,754.0 970.8,749.1 970.9,747.0 971.0,743.5 971.2,742.0 971.3,748.9 971.4,749.9 971.6,745.6 971.7,748.7 971.8,748.6 972.0,743.7 972.1,741.6 972.2,746.6 972.4,748.1 972.5,745.6 972.6,754.6 972.8,747.8 972.9,751.2 973.0,738.5 973.2,744.3 973.3,746.7 973.4,747.8 973.6,756.6 973.7,744.8 973.8,741.6 974.0,750.4 974.1,745.1 974.2,744.8 974.4,753.3 974.5,744.7 974.6,742.9 974.8,747.5 974.9,748.5 975.0,745.3 975.2,753.6 975.3,747.4 975.4,743.5 975.5,751.9 975.7,743.8 975.8,748.8 975.9,755.0 976.1,747.7 976.2,751.0 976.3,746.5 976.5,752.1 976.6,744.0 976.7,750.5 976.9,746.0 977.0,749.5 977.1,748.7 977.3,743.2 977.4,747.1 977.5,749.5 977.7,752.7 977.8,743.9 977.9,745.7 978.1,749.4 978.2,747.5 978.3,752.2 978.5,752.0 978.6,751.3 978.7,747.1 978.9,747.5 979.0,751.2 979.1,745.8 979.3,745.8 979.4,748.1 979.5,744.9 979.7,749.6 979.8,748.8 979.9,746.6 980.1,748.7 980.2,746.0 980.3,753.3 980.5,743.2 980.6,751.0 980.7,748.3 980.9,753.0 981.0,745.7 981.1,743.2 981.2,743.7 981.4,744.4 981.5,753.3 981.6,750.2 981.8,749.2 981.9,751.1 982.0,743.5 982.2,746.9 982.3,747.6 982.4,746.3 982.6,751.4 982.7,751.3 982.8,751.3 983.0,746.1 983.1,746.8 983.2,745.6 983.4,743.6 983.5,752.5 983.6,749.8 983.8,747.3 983.9,752.6 984.0,749.8 984.2,743.8 984.3,743.4 984.4,743.1 984.6,747.1 984.7,748.0 984.8,743.1 985.0,748.3 985.1,745.2 985.2,741.6 985.4,747.6 985.5,748.4 985.6,746.0 985.8,743.4 985.9,743.5 986.0,744.8 986.2,743.9 986.3,752.2 986.4,754.7 986.6,745.8 986.7,750.1 986.8,752.0 987.0,751.4 987.1,750.8 987.2,748.3 987.3,751.1 987.5,747.0 987.6,741.7 987.7,748.8 987.9,743.1 988.0,746.6 988.1,751.8 988.3,748.9 988.4,751.8 988.5,745.3 988.7,752.4 988.8,743.7 988.9,746.6 989.1,756.0 989.2,745.6 989.3,742.6 989.5,750.7 989.6,744.1 989.7,754.2 989.9,746.9 990.0,753.6 990.1,745.2 990.3,753.1 990.4,755.7 990.5,744.9 990.7,738.0 990.8,748.1 990.9,742.6 991.1,745.2 991.2,746.8 991.3,743.7 991.5,739.9 991.6,750.2 991.7,743.7 991.9,744.6 992.0,750.7 992.1,739.2 992.3,738.1 992.4,748.8 992.5,739.3 992.7,745.2 992.8,746.1 992.9,739.9 993.1,744.9 993.2,744.3 993.3,739.8 993.4,740.8 993.6,742.4 993.7,750.8 993.8,751.1 994.0,741.3 994.1,748.8 994.2,745.3 994.4,749.1 994.5,746.1 994.6,749.7 994.8,739.3 994.9,749.1 995.0,746.0 995.2,746.0 995.3,741.3 995.4,751.2 995.6,745.9 995.7,746.5 995.8,743.9 996.0,744.4 996.1,747.8 996.2,745.2 996.4,747.3 996.5,744.5 996.6,746.4 996.8,748.8 996.9,746.4 997.0,745.2 997.2,738.1 997.3,748.3 997.4,745.3 997.6,741.3 997.7,754.7 997.8,753.4 998.0,751.6 998.1,747.2 998.2,738.1 998.4,745.5 998.5,742.5 998.6,747.6 998.8,755.6 998.9,755.2 999.0,743.0 999.2,745.7 999.3,750.9 999.4,742.1 999.5,751.8 999.7,742.1 999.8,740.8 999.9,748.7 1000.1,749.7 1000.2,742.7 1000.3,749.3 1000.5,742.6 1000.6,750.3 1000.7,743.0 1000.9,745.5 1001.0,747.5 1001.1,749.2 1001.3,744.7 1001.4,752.8 1001.5,746.9 1001.7,747.1 1001.8,743.1 1001.9,750.3 1002.1,739.4 1002.2,746.7 1002.3,749.7 1002.5,740.5 1002.6,739.9 1002.7,746.5 1002.9,749.3 1003.0,746.1 1003.1,749.0 1003.3,747.7 1003.4,740.9 1003.5,745.1 1003.7,746.4 1003.8,745.5 1003.9,746.9 1004.1,743.7 1004.2,743.4 1004.3,748.3 1004.5,746.3 1004.6,737.7 1004.7,745.0 1004.9,747.2 1005.0,739.5 1005.1,747.1 1005.3,751.4 1005.4,744.9 1005.5,750.9 1005.6,749.7 1005.8,747.1 1005.9,748.8 1006.0,751.2 1006.2,750.0 1006.3,750.1 1006.4,743.7 1006.6,750.9 1006.7,750.3 1006.8,741.2 1007.0,750.4 1007.1,742.9 1007.2,743.9 1007.4,748.9 1007.5,754.0 1007.6,746.9 1007.8,746.0 1007.9,745.7 1008.0,749.1 1008.2,745.2 1008.3,744.5 1008.4,753.4 1008.6,744.2 1008.7,748.9 1008.8,751.6 1009.0,750.5 1009.1,742.4 1009.2,745.3 1009.4,733.6 1009.5,748.9 1009.6,749.3 1009.8,749.5 1009.9,750.5 1010.0,754.1 1010.2,745.1 1010.3,751.7 1010.4,749.6 1010.6,749.7 1010.7,750.6 1010.8,744.4 1011.0,745.6 1011.1,749.8 1011.2,750.8 1011.4,748.3 1011.5,742.6 1011.6,745.5 1011.7,744.9 1011.9,746.6 1012.0,746.3 1012.1,744.5 1012.3,752.0 1012.4,739.1 1012.5,747.9 1012.7,747.3 1012.8,740.0 1012.9,744.7 1013.1,745.3 1013.2,747.4 1013.3,750.8 1013.5,744.5 1013.6,740.9 1013.7,748.5 1013.9,740.4 1014.0,749.7 1014.1,748.7 1014.3,744.8 1014.4,746.8 1014.5,743.8 1014.7,749.2 1014.8,750.7 1014.9,753.7 1015.1,751.4 1015.2,751.0 1015.3,752.4 1015.5,746.1 1015.6,749.8 1015.7,754.7 1015.9,738.4 1016.0,750.3 1016.1,751.9 1016.3,742.6 1016.4,742.8 1016.5,751.6 1016.7,753.0 1016.8,751.1 1016.9,743.4 1017.1,749.0 1017.2,750.8 1017.3,747.8 1017.4,743.2 1017.6,752.0 1017.7,747.8 1017.8,751.9 1018.0,739.1 1018.1,740.0 1018.2,743.2 1018.4,746.9 1018.5,744.0 1018.6,754.1 1018.8,745.1 1018.9,750.7 1019.0,750.6 1019.2,748.1 1019.3,746.6 1019.4,743.3 1019.6,742.6 1019.7,744.2 1019.8,748.4 1020.0,742.7 1020.1,745.5 1020.2,740.8 1020.4,748.2 1020.5,754.9 1020.6,746.3 1020.8,736.8 1020.9,743.1 1021.0,746.0 1021.2,741.9 1021.3,743.1 1021.4,743.7 1021.6,747.4 1021.7,745.1 1021.8,744.7 1022.0,747.3 1022.1,749.2 1022.2,744.7 1022.4,741.7 1022.5,743.1 1022.6,743.7 1022.8,744.0 1022.9,736.6 1023.0,745.3 1023.2,742.2 1023.3,738.6 1023.4,745.9 1023.5,745.0 1023.7,742.2 1023.8,739.8 1023.9,745.0 1024.1,745.1 1024.2,745.8 1024.3,750.3 1024.5,741.9 1024.6,747.2 1024.7,752.5 1024.9,746.5 1025.0,752.5 1025.1,750.3 1025.3,746.8 1025.4,750.3 1025.5,742.9 1025.7,752.5 1025.8,746.2 1025.9,745.0 1026.1,741.7 1026.2,743.5 1026.3,745.8 1026.5,746.7 1026.6,747.2 1026.7,742.6 1026.9,749.2 1027.0,745.0 1027.1,747.4 1027.3,746.0 1027.4,747.3 1027.5,738.7 1027.7,748.7 1027.8,745.0 1027.9,745.0 1028.1,744.0 1028.2,744.9 1028.3,745.0 1028.5,743.2 1028.6,752.3 1028.7,746.6 1028.9,751.5 1029.0,746.1 1029.1,751.3 1029.3,750.5 1029.4,747.2 1029.5,741.9 1029.6,744.8 1029.8,745.7 1029.9,741.6 1030.0,750.1 1030.2,754.3 1030.3,748.1 1030.4,747.6 1030.6,742.1 1030.7,739.0 1030.8,751.7 1031.0,737.9 1031.1,741.3 1031.2,743.8 1031.4,745.3 1031.5,737.3 1031.6,746.0 1031.8,747.4 1031.9,745.1 1032.0,750.6 1032.2,743.3 1032.3,745.2 1032.4,743.7 1032.6,743.9 1032.7,748.8 1032.8,740.2 1033.0,748.8 1033.1,741.9 1033.2,750.7 1033.4,743.6 1033.5,748.1 1033.6,744.9 1033.8,747.5 1033.9,753.4 1034.0,749.3 1034.2,745.1 1034.3,743.0 1034.4,750.5 1034.6,752.5 1034.7,747.7 1034.8,745.5 1035.0,747.3 1035.1,747.9 1035.2,760.0 1035.4,741.7 1035.5,742.9 1035.6,749.1 1035.7,744.8 1035.9,745.6 1036.0,750.3 1036.1,741.8 1036.3,744.7 1036.4,746.9 1036.5,740.5 1036.7,743.2 1036.8,742.7 1036.9,741.6 1037.1,743.5 1037.2,750.6 1037.3,747.6 1037.5,742.5 1037.6,749.3 1037.7,746.9 1037.9,745.8 1038.0,742.2 1038.1,742.8 1038.3,744.2 1038.4,748.3 1038.5,744.1 1038.7,745.8 1038.8,748.2 1038.9,742.7 1039.1,746.2 1039.2,750.6 1039.3,743.4 1039.5,749.1 1039.6,746.1 1039.7,753.5 1039.9,747.8 1040.0,751.3 1040.1,751.5 1040.3,754.7 1040.4,739.6 1040.5,747.8 1040.7,746.4 1040.8,743.3 1040.9,747.5 1041.1,745.2 1041.2,752.2 1041.3,746.5 1041.5,748.5 1041.6,745.1 1041.7,746.4 1041.8,752.3 1042.0,753.9 1042.1,750.8 1042.2,744.1 1042.4,745.2 1042.5,745.1 1042.6,753.8 1042.8,756.2 1042.9,748.9 1043.0,747.9 1043.2,748.9 1043.3,745.1 1043.4,746.8 1043.6,750.6 1043.7,749.9 1043.8,746.1 1044.0,746.3 1044.1,746.8 1044.2,738.1 1044.4,747.2 1044.5,745.8 1044.6,749.6 1044.8,747.1 1044.9,743.9 1045.0,743.7 1045.2,746.4 1045.3,744.2 1045.4,745.4 1045.6,752.3 1045.7,757.5 1045.8,737.4 1046.0,742.8 1046.1,745.9 1046.2,751.9 1046.4,750.4 1046.5,740.6 1046.6,755.7 1046.8,746.5 1046.9,742.2 1047.0,744.6 1047.2,742.3 1047.3,745.8 1047.4,736.8 1047.5,749.3 1047.7,750.4 1047.8,744.7 1047.9,740.9 1048.1,746.7 1048.2,742.7 1048.3,748.0 1048.5,750.4 1048.6,740.7 1048.7,740.3 1048.9,740.9 1049.0,747.8 1049.1,750.3 1049.3,750.0 1049.4,746.3 1049.5,743.1 1049.7,742.9 1049.8,750.5 1049.9,744.7 1050.1,745.5 1050.2,745.1 1050.3,745.4 1050.5,746.2 1050.6,742.8 1050.7,744.0 1050.9,743.6 1051.0,746.8 1051.1,742.5 1051.3,744.1 1051.4,751.1 1051.5,741.6 1051.7,744.6 1051.8,740.1 1051.9,744.7 1052.1,744.3 1052.2,743.1 1052.3,744.1 1052.5,745.9 1052.6,751.0 1052.7,737.9 1052.9,750.7 1053.0,746.3 1053.1,742.3 1053.3,743.0 1053.4,742.5 1053.5,742.0 1053.6,740.3 1053.8,743.9 1053.9,734.1 1054.0,748.9 1054.2,744.6 1054.3,746.8 1054.4,747.6 1054.6,745.1 1054.7,740.9 1054.8,748.9 1055.0,749.0 1055.1,744.1 1055.2,744.7 1055.4,739.6 1055.5,743.0 1055.6,746.1 1055.8,748.2 1055.9,746.4 1056.0,748.0 1056.2,752.2 1056.3,747.5 1056.4,748.2 1056.6,748.6 1056.7,749.1 1056.8,741.4 1057.0,745.0 1057.1,744.0 1057.2,750.0 1057.4,751.3 1057.5,748.4 1057.6,746.6 1057.8,748.7 1057.9,747.9 1058.0,743.7 1058.2,746.4 1058.3,751.3 1058.4,749.1 1058.6,749.8 1058.7,746.5 1058.8,751.3 1059.0,747.3 1059.1,744.1 1059.2,746.3 1059.4,749.6 1059.5,748.4 1059.6,745.4 1059.7,744.2 1059.9,742.9 1060.0,746.7 1060.1,751.1 1060.3,741.0 1060.4,745.2 1060.5,744.9 1060.7,745.3 1060.8,750.3 1060.9,747.5 1061.1,745.1 1061.2,742.0 1061.3,745.7 1061.5,757.1 1061.6,745.9 1061.7,743.6 1061.9,740.3 1062.0,742.5 1062.1,736.4 1062.3,740.5 1062.4,740.8 1062.5,742.4 1062.7,751.3 1062.8,742.8 1062.9,743.8 1063.1,747.9 1063.2,743.7 1063.3,744.4 1063.5,747.5 1063.6,746.2 1063.7,746.5 1063.9,744.7 1064.0,747.1 1064.1,743.5 1064.3,752.5 1064.4,747.3 1064.5,752.4 1064.7,748.0 1064.8,744.2 1064.9,746.8 1065.1,747.5 1065.2,746.5 1065.3,740.8 1065.5,750.5 1065.6,743.2 1065.7,751.8 1065.8,747.9 1066.0,745.5 1066.1,750.7 1066.2,745.8 1066.4,743.8 1066.5,750.7 1066.6,746.1 1066.8,746.9 1066.9,752.5 1067.0,746.3 1067.2,748.3 1067.3,740.7 1067.4,748.4 1067.6,739.0 1067.7,746.5 1067.8,737.7 1068.0,742.5 1068.1,742.7 1068.2,740.9 1068.4,740.5 1068.5,738.9 1068.6,737.8 1068.8,745.1 1068.9,748.2 1069.0,753.5 1069.2,745.3 1069.3,741.3 1069.4,743.0 1069.6,744.0 1069.7,689.0 1069.8,689.0 1070.0,703.9 1070.1,743.6 1070.2,751.6 1070.4,742.8 1070.5,750.9 1070.6,746.0 1070.8,748.3 1070.9,747.8 1071.0,750.2 1071.2,750.3 1071.3,747.2 1071.4,750.1 1071.6,736.9 1071.7,747.3 1071.8,747.9 1071.9,747.7 1072.1,753.8 1072.2,754.6 1072.3,746.7 1072.5,744.4 1072.6,751.2 1072.7,745.4 1072.9,749.8 1073.0,745.4 1073.1,743.8 1073.3,743.4 1073.4,743.7 1073.5,747.9 1073.7,741.8 1073.8,746.5 1073.9,743.7 1074.1,742.0 1074.2,745.6 1074.3,758.9 1074.5,742.6 1074.6,749.1 1074.7,748.6 1074.9,749.3 1075.0,742.3 1075.1,746.1 1075.3,754.4 1075.4,743.7 1075.5,738.8 1075.7,739.6 1075.8,748.0 1075.9,745.2 1076.1,743.6 1076.2,742.2 1076.3,745.4 1076.5,749.5 1076.6,742.7 1076.7,743.1 1076.9,750.3 1077.0,746.9 1077.1,744.4 1077.3,745.5 1077.4,743.6 1077.5,742.0 1077.7,742.9 1077.8,745.3 1077.9,749.4 1078.0,742.0 1078.2,739.4 1078.3,737.3 1078.4,744.3 1078.6,743.7 1078.7,738.1 1078.8,738.2 1079.0,742.3 1079.1,741.4 1079.2,746.7 1079.4,741.9 1079.5,746.8 1079.6,744.3 1079.8,744.3 1079.9,746.2 1080.0,752.6 1080.2,747.6 1080.3,743.2 1080.4,744.9 1080.6,746.0 1080.7,743.1 1080.8,742.7 1081.0,742.6 1081.1,748.9 1081.2,746.1 1081.4,747.3 1081.5,749.2 1081.6,751.5 1081.8,746.8 1081.9,749.6 1082.0,738.9 1082.2,747.0 1082.3,747.4 1082.4,748.1 1082.6,739.9 1082.7,750.2 1082.8,747.7 1083.0,750.0 1083.1,747.5 1083.2,746.5 1083.4,742.3 1083.5,751.5 1083.6,746.4 1083.7,740.5 1083.9,748.3 1084.0,747.3 1084.1,749.8 1084.3,762.3 1084.4,746.3 1084.5,741.5 1084.7,747.5 1084.8,752.6 1084.9,744.9 1085.1,745.5 1085.2,742.1 1085.3,742.3 1085.5,746.6 1085.6,744.0 1085.7,752.0 1085.9,740.9 1086.0,744.3 1086.1,740.6 1086.3,740.5 1086.4,745.6 1086.5,745.1 1086.7,747.4 1086.8,751.8 1086.9,744.9 1087.1,743.8 1087.2,748.3 1087.3,741.7 1087.5,743.4 1087.6,742.3 1087.7,747.1 1087.9,751.1 1088.0,746.2 1088.1,742.5 1088.3,745.2 1088.4,746.5 1088.5,746.0 1088.7,745.4 1088.8,746.8 1088.9,752.5 1089.1,742.0 1089.2,750.7 1089.3,746.7 1089.5,747.0 1089.6,745.3 1089.7,751.9 1089.8,741.6 1090.0,743.8 1090.1,743.6 1090.2,741.3 1090.4,748.8 1090.5,757.3 1090.6,744.5 1090.8,741.4 1090.9,741.8 1091.0,747.5 1091.2,745.7 1091.3,744.0 1091.4,751.8 1091.6,747.5 1091.7,747.2 1091.8,739.5 1092.0,747.9 1092.1,739.8 1092.2,745.4 1092.4,751.8 1092.5,737.8 1092.6,751.6 1092.8,743.4 1092.9,739.2 1093.0,747.3 1093.2,750.1 1093.3,741.6 1093.4,744.8 1093.6,749.8 1093.7,749.0 1093.8,746.3 1094.0,741.1 1094.1,745.6 1094.2,742.0 1094.4,738.7 1094.5,740.0 1094.6,739.6 1094.8,748.7 1094.9,751.3 1095.0,740.6 1095.2,743.7 1095.3,744.8 1095.4,748.3 1095.6,750.6 1095.7,748.8 1095.8,744.7 1095.9,748.8 1096.1,747.5 1096.2,746.9 1096.3,742.5 1096.5,745.7 1096.6,745.1 1096.7,740.1 1096.9,746.2 1097.0,743.0 1097.1,749.1 1097.3,744.2 1097.4,745.1 1097.5,745.1 1097.7,747.5 1097.8,749.9 1097.9,747.0 1098.1,747.3 1098.2,741.7 1098.3,742.5 1098.5,750.2 1098.6,743.4 1098.7,747.3 1098.9,743.3 1099.0,746.9 1099.1,750.4 1099.3,741.2 1099.4,743.0 1099.5,748.9 1099.7,751.4 1099.8,746.6 1099.9,749.1 1100.1,745.8 1100.2,742.0 1100.3,739.0 1100.5,745.7 1100.6,739.3 1100.7,739.9 1100.9,745.8 1101.0,750.5 1101.1,740.7 1101.3,741.7 1101.4,735.2 1101.5,738.5 1101.7,740.4 1101.8,737.4 1101.9,747.5 1102.0,743.2 1102.2,745.1 1102.3,737.8 1102.4,742.1 1102.6,755.4 1102.7,739.4 1102.8,747.8 1103.0,741.7 1103.1,746.2 1103.2,743.2 1103.4,741.9 1103.5,743.7 1103.6,747.8 1103.8,739.6 1103.9,743.4 1104.0,744.6 1104.2,741.8 1104.3,746.1 1104.4,737.3 1104.6,743.5 1104.7,743.0 1104.8,743.3 1105.0,748.2 1105.1,749.0 1105.2,744.0 1105.4,743.3 1105.5,739.6 1105.6,742.7 1105.8,748.3 1105.9,742.2 1106.0,741.4 1106.2,740.7 1106.3,742.9 1106.4,748.7 1106.6,740.0 1106.7,747.3 1106.8,742.4 1107.0,750.6 1107.1,741.9 1107.2,747.6 1107.4,741.0 1107.5,738.7 1107.6,740.8 1107.8,749.5 1107.9,748.7 1108.0,748.9 1108.1,743.3 1108.3,744.4 1108.4,745.1 1108.5,744.4 1108.7,743.0 1108.8,742.8 1108.9,739.1 1109.1,745.5 1109.2,744.6 1109.3,751.8 1109.5,750.0 1109.6,747.7 1109.7,749.5 1109.9,744.8 1110.0,741.7 1110.1,747.0 1110.3,747.3 1110.4,747.2 1110.5,744.8 1110.7,747.0 1110.8,743.3 1110.9,743.8 1111.1,743.4 1111.2,741.9 1111.3,743.9 1111.5,743.0 1111.6,737.0 1111.7,743.6 1111.9,740.6 1112.0,744.0 1112.1,745.7 1112.3,745.5 1112.4,746.7 1112.5,743.6 1112.7,745.6 1112.8,744.6 1112.9,738.6 1113.1,743.5 1113.2,738.6 1113.3,741.6 1113.5,739.6 1113.6,744.3 1113.7,741.5 1113.8,732.0 1114.0,739.0 1114.1,738.5 1114.2,741.2 1114.4,739.2 1114.5,746.5 1114.6,745.7 1114.8,741.4 1114.9,739.6 1115.0,744.1 1115.2,743.5 1115.3,744.1 1115.4,743.5 1115.6,747.1 1115.7,748.2 1115.8,743.3 1116.0,749.8 1116.1,747.3 1116.2,745.8 1116.4,747.7 1116.5,743.1 1116.6,745.4 1116.8,744.1 1116.9,747.9 1117.0,747.2 1117.2,743.2 1117.3,743.9 1117.4,746.9 1117.6,743.9 1117.7,744.4 1117.8,744.5 1118.0,739.2 1118.1,746.7 1118.2,744.1 1118.4,744.2 1118.5,746.5 1118.6,750.0 1118.8,743.7 1118.9,745.3 1119.0,745.8 1119.2,745.7 1119.3,745.3 1119.4,748.3 1119.6,744.2 1119.7,751.4 1119.8,744.8 1119.9,750.6 1120.1,746.3 1120.2,742.3 1120.3,745.9 1120.5,746.2 1120.6,742.1 1120.7,744.9 1120.9,745.2 1121.0,744.9 1121.1,737.9 1121.3,741.3 1121.4,741.8 1121.5,747.8 1121.7,741.1 1121.8,748.2 1121.9,741.4 1122.1,746.8 1122.2,735.5 1122.3,748.7 1122.5,738.5 1122.6,740.2 1122.7,750.0 1122.9,744.6 1123.0,738.4 1123.1,739.5 1123.3,749.3 1123.4,745.4 1123.5,747.6 1123.7,746.9 1123.8,745.7 1123.9,736.6 1124.1,743.0 1124.2,744.2 1124.3,744.9 1124.5,741.4 1124.6,741.0 1124.7,746.9 1124.9,738.5 1125.0,747.9 1125.1,744.7 1125.3,742.3 1125.4,738.0 1125.5,746.0 1125.7,743.8 1125.8,739.9 1125.9,742.6 1126.0,740.6 1126.2,740.7 1126.3,743.3 1126.4,742.2 1126.6,741.1 1126.7,744.5 1126.8,738.4 1127.0,751.3 1127.1,747.6 1127.2,739.2 1127.4,742.8 1127.5,746.7 1127.6,743.2 1127.8,740.5 1127.9,746.5 1128.0,741.3 1128.2,744.6 1128.3,744.7 1128.4,744.4 1128.6,740.2 1128.7,748.0 1128.8,744.9 1129.0,741.2 1129.1,748.6 1129.2,749.5 1129.4,741.5 1129.5,743.4 1129.6,744.0 1129.8,743.1 1129.9,747.1 1130.0,727.4 1130.2,747.2 1130.3,745.3 1130.4,748.8 1130.6,745.1 1130.7,737.8 1130.8,743.4 1131.0,741.1 1131.1,745.2 1131.2,736.8 1131.4,742.9 1131.5,747.9 1131.6,740.2 1131.8,744.3 1131.9,740.5 1132.0,742.3 1132.1,741.9 1132.3,742.3 1132.4,745.5 1132.5,747.9 1132.7,739.1 1132.8,743.3 1132.9,741.7 1133.1,744.4 1133.2,750.2 1133.3,747.6 1133.5,738.4 1133.6,746.3 1133.7,744.7 1133.9,748.7 1134.0,745.6 1134.1,745.0 1134.3,744.6 1134.4,744.0 1134.5,746.1 1134.7,745.8 1134.8,743.7 1134.9,742.7 1135.1,744.6 1135.2,737.7 1135.3,743.4 1135.5,743.7 1135.6,747.0 1135.7,740.8 1135.9,748.4 1136.0,749.9 1136.1,747.6 1136.3,742.1 1136.4,748.3 1136.5,739.5 1136.7,744.1 1136.8,749.1 1136.9,744.4 1137.1,737.2 1137.2,746.6 1137.3,747.8 1137.5,741.4 1137.6,738.3 1137.7,739.1 1137.9,743.8 1138.0,741.8 1138.1,741.2 1138.2,738.1 1138.4,734.5 1138.5,742.6 1138.6,737.3 1138.8,742.9 1138.9,739.0 1139.0,745.0 1139.2,744.2 1139.3,740.5 1139.4,745.7 1139.6,739.0 1139.7,744.3 1139.8,742.1 1140.0,743.0 1140.1,744.2 1140.2,742.6 1140.4,739.3 1140.5,732.1 1140.6,748.1 1140.8,742.6 1140.9,744.2 1141.0,747.0 1141.2,743.1 1141.3,747.6 1141.4,744.9 1141.6,739.9 1141.7,751.7 1141.8,743.6 1142.0,743.0 1142.1,748.7 1142.2,743.7 1142.4,744.1 1142.5,746.8 1142.6,741.0 1142.8,749.9 1142.9,743.1 1143.0,746.3 1143.2,749.2 1143.3,746.1 1143.4,746.8 1143.6,742.5 1143.7,750.5 1143.8,745.6 1144.0,746.3 1144.1,738.7 1144.2,748.6 1144.3,740.7 1144.5,750.9 1144.6,742.9 1144.7,744.6 1144.9,742.8 1145.0,746.6 1145.1,751.0 1145.3,749.5 1145.4,738.7 1145.5,742.4 1145.7,746.4 1145.8,740.1 1145.9,746.1 1146.1,745.8 1146.2,747.3 1146.3,738.5 1146.5,735.5 1146.6,764.9 1146.7,741.4 1146.9,739.0 1147.0,735.5 1147.1,752.1 1147.3,743.2 1147.4,741.5 1147.5,748.8 1147.7,742.0 1147.8,742.6 1147.9,740.9 1148.1,746.3 1148.2,742.8 1148.3,746.8 1148.5,742.4 1148.6,744.2 1148.7,746.4 1148.9,750.3 1149.0,739.0 1149.1,740.9 1149.3,741.9 1149.4,747.8 1149.5,746.5 1149.7,738.9 1149.8,742.6 1149.9,748.3 1150.0,744.6 1150.2,744.1 1150.3,744.8 1150.4,747.6 1150.6,739.4 1150.7,742.1 1150.8,745.4 1151.0,750.4 1151.1,746.5 1151.2,744.1 1151.4,740.3 1151.5,744.6 1151.6,739.2 1151.8,742.4 1151.9,745.3 1152.0,752.4 1152.2,746.6 1152.3,747.8 1152.4,742.8 1152.6,740.6 1152.7,736.9 1152.8,742.1 1153.0,746.3 1153.1,733.1 1153.2,740.4 1153.4,742.4 1153.5,742.4 1153.6,746.3 1153.8,738.8 1153.9,739.8 1154.0,735.2 1154.2,737.2 1154.3,737.6 1154.4,736.5 1154.6,742.6 1154.7,743.1 1154.8,741.9 1155.0,746.4 1155.1,742.7 1155.2,743.6 1155.4,740.1 1155.5,742.5 1155.6,749.1 1155.8,742.1 1155.9,737.2 1156.0,748.9 1156.1,745.1 1156.3,742.4 1156.4,747.4 1156.5,744.5 1156.7,742.3 1156.8,747.5 1156.9,741.7 1157.1,741.4 1157.2,747.3 1157.3,742.8 1157.5,738.8 1157.6,743.7 1157.7,741.4 1157.9,740.5 1158.0,744.1 1158.1,739.9 1158.3,741.8 1158.4,746.4 1158.5,740.7 1158.7,739.5 1158.8,739.7 1158.9,745.3 1159.1,741.5 1159.2,738.0 1159.3,742.0 1159.5,738.5 1159.6,738.2 1159.7,743.0 1159.9,740.7 1160.0,744.3 1160.1,739.2 1160.3,743.5 1160.4,745.2 1160.5,743.6 1160.7,743.4 1160.8,741.7 1160.9,741.5 1161.1,747.1 1161.2,745.0 1161.3,741.0 1161.5,740.2 1161.6,741.7 1161.7,732.8 1161.9,738.6 1162.0,742.8 1162.1,740.0 1162.2,737.5 1162.4,741.0 1162.5,748.8 1162.6,742.5 1162.8,742.6 1162.9,735.0 1163.0,749.9 1163.2,737.6 1163.3,743.8 1163.4,739.9 1163.6,744.3 1163.7,742.6 1163.8,738.8 1164.0,742.7 1164.1,739.1 1164.2,742.9 1164.4,744.6 1164.5,744.0 1164.6,745.1 1164.8,743.6 1164.9,738.4 1165.0,747.6 1165.2,749.6 1165.3,743.6 1165.4,737.3 1165.6,739.7 1165.7,738.6 1165.8,739.0 1166.0,746.2 1166.1,743.2 1166.2,753.2 1166.4,745.3 1166.5,740.9 1166.6,748.6 1166.8,750.6 1166.9,747.8 1167.0,742.3 1167.2,739.0 1167.3,734.1 1167.4,738.3 1167.6,749.4 1167.7,751.9 1167.8,743.0 1168.0,739.6 1168.1,749.5 1168.2,745.2 1168.3,744.7 1168.5,742.7 1168.6,743.6 1168.7,741.1 1168.9,739.0 1169.0,742.7 1169.1,740.0 1169.3,735.4 1169.4,746.2 1169.5,746.5 1169.7,741.0 1169.8,735.9 1169.9,742.1 1170.1,738.5 1170.2,743.9 1170.3,739.1 1170.5,745.2 1170.6,740.1 1170.7,740.7 1170.9,740.8 1171.0,737.2 1171.1,738.2 1171.3,744.3 1171.4,739.2 1171.5,748.8 1171.7,739.0 1171.8,732.8 1171.9,740.7 1172.1,740.9 1172.2,743.0 1172.3,740.1 1172.5,744.9 1172.6,740.7 1172.7,744.3 1172.9,744.7 1173.0,742.6 1173.1,743.1 1173.3,749.6 1173.4,735.3 1173.5,742.3 1173.7,749.3 1173.8,738.9 1173.9,743.0 1174.1,742.6 1174.2,740.5 1174.3,746.4 1174.4,754.1 1174.6,743.9 1174.7,742.2 1174.8,739.3 1175.0,745.5 1175.1,743.7 1175.2,741.3 1175.4,743.7 1175.5,743.2 1175.6,741.2 1175.8,745.7 1175.9,736.4 1176.0,745.6 1176.2,742.2 1176.3,743.9 1176.4,745.3 1176.6,740.5 1176.7,739.2 1176.8,737.5 1177.0,740.3 1177.1,743.8 1177.2,739.3 1177.4,747.8 1177.5,742.8 1177.6,740.9 1177.8,740.6 1177.9,747.0 1178.0,748.2 1178.2,736.8 1178.3,744.9 1178.4,749.2 1178.6,747.7 1178.7,742.9 1178.8,738.6 1179.0,743.2 1179.1,738.6 1179.2,741.7 1179.4,740.8 1179.5,738.5 1179.6,743.0 1179.8,701.3 1179.9,711.7 1180.0,744.4 1180.1,739.5 1180.3,745.4 1180.4,742.5 1180.5,745.3 1180.7,742.3 1180.8,743.7 1180.9,737.9 1181.1,741.7 1181.2,741.6 1181.3,736.1 1181.5,752.5 1181.6,746.0 1181.7,751.8 1181.9,741.9 1182.0,740.6 1182.1,740.0 1182.3,808.6 1182.4,808.6 1182.5,808.6 1182.7,808.6 1182.8,808.6 1182.9,808.6 1183.1,808.6 1183.2,808.6 1183.3,808.6" stroke="#0000ff" stroke-width="1.6" fill="none" stroke-linejoin="round"/>
<path d="M911.4 517.0H1185.0V636.5H911.4ZM911.70 636.5v7.3M978.00 636.5v7.3M1044.30 636.5v7.3M1110.60 636.5v7.3M1176.90 636.5v7.3M911.4 636.30h-7.3M911.4 610.30h-7.3M911.4 584.30h-7.3M911.4 558.30h-7.3M911.4 532.30h-7.3" stroke="#000" stroke-width="1.75" fill="none"/>
<path d="M911.4 689.0H1185.0V808.6H911.4ZM911.70 808.6v7.3M978.00 808.6v7.3M1044.30 808.6v7.3M1110.60 808.6v7.3M1176.90 808.6v7.3M911.4 808.20h-7.3M911.4 782.13h-7.3M911.4 756.06h-7.3M911.4 729.99h-7.3M911.4 703.92h-7.3" stroke="#000" stroke-width="1.75" fill="none"/>
<text x="911.7" y="659.6" font-size="9.72" text-anchor="middle">0</text>
<text x="911.7" y="831.7" font-size="9.72" text-anchor="middle">0</text>
<text x="896.6" y="639.8" font-size="9.72" text-anchor="end">100</text>
<text x="896.6" y="811.8" font-size="9.72" text-anchor="end">100</text>
<text x="978.0" y="659.6" font-size="9.72" text-anchor="middle">500</text>
<text x="978.0" y="831.7" font-size="9.72" text-anchor="middle">500</text>
<text x="896.6" y="613.8" font-size="9.72" text-anchor="end">200</text>
<text x="896.6" y="785.7" font-size="9.72" text-anchor="end">200</text>
<text x="1044.3" y="659.6" font-size="9.72" text-anchor="middle">1000</text>
<text x="1044.3" y="831.7" font-size="9.72" text-anchor="middle">1000</text>
<text x="896.6" y="587.8" font-size="9.72" text-anchor="end">300</text>
<text x="896.6" y="759.6" font-size="9.72" text-anchor="end">300</text>
<text x="1110.6" y="659.6" font-size="9.72" text-anchor="middle">1500</text>
<text x="1110.6" y="831.7" font-size="9.72" text-anchor="middle">1500</text>
<text x="896.6" y="561.8" font-size="9.72" text-anchor="end">400</text>
<text x="896.6" y="733.5" font-size="9.72" text-anchor="end">400</text>
<text x="1176.9" y="659.6" font-size="9.72" text-anchor="middle">2000</text>
<text x="1176.9" y="831.7" font-size="9.72" text-anchor="middle">2000</text>
<text x="896.6" y="535.8" font-size="9.72" text-anchor="end">500</text>
<text x="896.6" y="707.5" font-size="9.72" text-anchor="end">500</text>
<text x="1048.9" y="677.8" font-size="10.42" text-anchor="middle">X</text>
<text x="1048.9" y="849.8" font-size="10.42" text-anchor="middle">Y</text>
<text transform="translate(866.0 577.0) rotate(-90)" font-size="10.42" text-anchor="middle">counts</text>
<text transform="translate(866.0 749.0) rotate(-90)" font-size="10.42" text-anchor="middle">counts</text>
<text transform="translate(1194.2 576.0) rotate(90)" font-size="10.42" text-anchor="middle">cut in x</text>
<text transform="translate(1194.2 749.3) rotate(90)" font-size="10.42" text-anchor="middle">cut in y</text>
<rect x="1108.7" y="519.8" width="73" height="16.2" rx="2.2" fill="#fff" fill-opacity="0.8" stroke="#ccc" stroke-width="1.1"/>
<path d="M1111.2 527.5h22.2" stroke="#0000ff" stroke-width="1.75"/>
<text x="1137.0" y="531.0" font-size="10.2" text-anchor="start">y=1024</text>
<rect x="1108.7" y="691.8" width="73" height="16.2" rx="2.2" fill="#fff" fill-opacity="0.8" stroke="#ccc" stroke-width="1.1"/>
<path d="M1111.2 699.5h22.2" stroke="#0000ff" stroke-width="1.75"/>
<text x="1137.0" y="703.0" font-size="10.2" text-anchor="start">x=1024</text>
</svg>
</body></html>
